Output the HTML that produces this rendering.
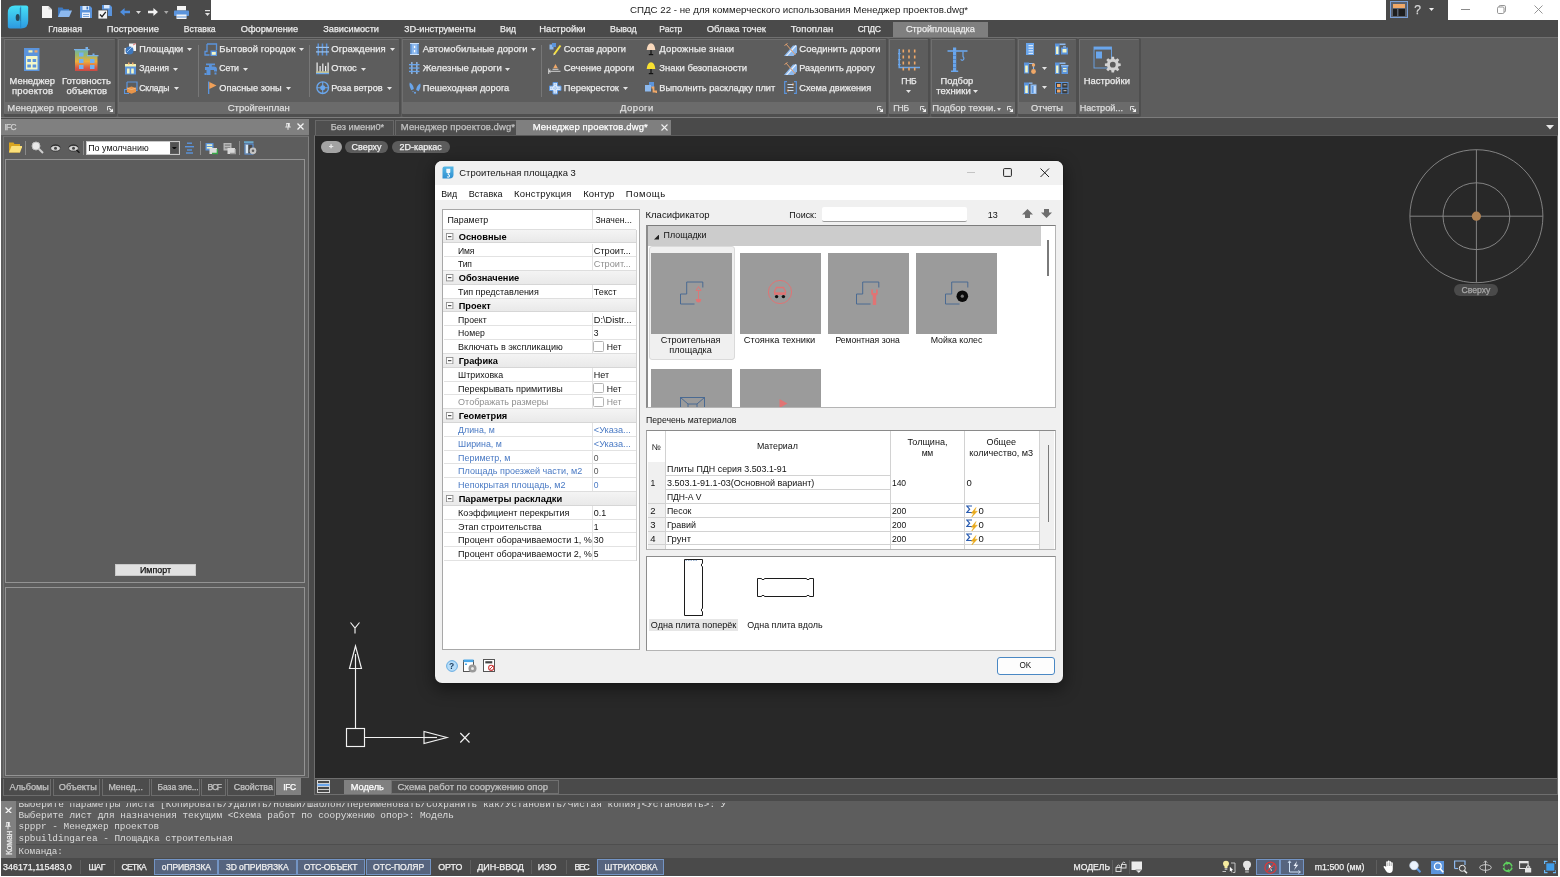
<!DOCTYPE html>
<html lang="ru">
<head>
<meta charset="utf-8">
<title>СПДС 22</title>
<style>
*{box-sizing:border-box}
html,body{margin:0;padding:0}
body{width:1560px;height:877px;background:#fff;position:relative;overflow:hidden;font-family:"Liberation Sans",sans-serif;font-size:11px;color:#e6e6e6}
.a{position:absolute}
.t{position:absolute;white-space:nowrap;line-height:14px;-webkit-text-stroke:0.25px}
.n{-webkit-text-stroke:0}
#app{left:1px;top:0;width:1557px;height:875.5px;background:#4a4a4a}
/* title */
#tw{left:211px;top:0;width:1175px;height:20px;background:#fff}
#tw2{left:1448px;top:0;width:113px;height:20px;background:#fff}
</style>
</head>
<body>
<div id="root" class="a" style="left:0;top:0;width:1560px;height:877px;will-change:transform">
<div id="app" class="a">
</div>
<div id="tw" class="a"></div>
<div class="a" style="left:1386px;top:0;width:62px;height:20px;background:#4a4a4a"></div>
<div id="tw2" class="a"></div>
<svg class="a" style="left:7px;top:5px;" width="22" height="24" viewBox="0 0 22 24"><defs><linearGradient id="lg1" x1="0" y1="0" x2="0" y2="1"><stop offset="0" stop-color="#46e0f6"/><stop offset="1" stop-color="#2d98e0"/></linearGradient></defs>
<path d="M8 0.6H19.2Q21.2 0.6 21.2 2.6V16Q21.2 23.6 14 23.6H2.8Q0.8 23.6 0.8 21.6V8Q0.8 0.6 8 0.6Z" fill="url(#lg1)"/><path d="M13.7 1.5V22.8" stroke="#1f86c4" stroke-width="0.8"/><ellipse cx="10.7" cy="12.4" rx="2" ry="3.5" fill="#27495c"/><path d="M13.3 3V16" stroke="#2a7aa8" stroke-width="0.9"/></svg>
<svg class="a" style="left:42px;top:6px;" width="10" height="12" viewBox="0 0 10 12"><path d="M0 0H6.5L10 3.5V12H0Z" fill="#f4f4f4"/><path d="M6.5 0V3.5H10Z" fill="#c9c9c9"/></svg>
<svg class="a" style="left:58px;top:7px;" width="14" height="10" viewBox="0 0 14 10"><path d="M0 0.5H4.5L5.5 2H11V10H0Z" fill="#3f78bd"/><path d="M2.8 3.5H14L11.2 10H0Z" fill="#8db9ee"/></svg>
<svg class="a" style="left:80px;top:6px;" width="12" height="12" viewBox="0 0 12 12"><path d="M0 0H10L12 2V12H0Z" fill="#5b94dc"/><rect x="2.5" y="0" width="6.5" height="4" fill="#dbe9fb"/><rect x="6.5" y="0.6" width="1.6" height="2.8" fill="#3f78bd"/><rect x="2" y="6.5" width="8" height="5.5" fill="#e9f1fc"/><rect x="3" y="8" width="6" height="1" fill="#7aa7de"/><rect x="3" y="10" width="6" height="1" fill="#7aa7de"/></svg>
<svg class="a" style="left:98px;top:5px;" width="14" height="14" viewBox="0 0 14 14"><path d="M4 0H12L14 2V11H4Z" fill="#5b94dc"/><rect x="6" y="0" width="5.5" height="3.4" fill="#dbe9fb"/><rect x="0" y="5" width="9.5" height="9" fill="#f4f4f4" stroke="#444" stroke-width="0.8"/><path d="M2 9.5L4 11.7L7.8 6.8" stroke="#222" stroke-width="1.3" fill="none"/></svg>
<svg class="a" style="left:120px;top:8px;" width="10" height="8" viewBox="0 0 10 8"><path d="M0 4L4.6 0V2.7H10V5.3H4.6V8Z" fill="#4f8fe0"/></svg>
<svg class="a" style="left:136px;top:11px;" width="5" height="3" viewBox="0 0 5 3"><path d="M0 0H5 L2.5 3 Z" fill="#d8d8d8"/></svg>
<svg class="a" style="left:148px;top:8px;" width="10" height="8" viewBox="0 0 10 8"><path d="M10 4L5.4 0V2.7H0V5.3H5.4V8Z" fill="#f2f2f2"/></svg>
<svg class="a" style="left:164.45px;top:11px;" width="4.5" height="3" viewBox="0 0 4.5 3"><path d="M0 0H4.5 L2.25 3 Z" fill="#a8a8a8"/></svg>
<svg class="a" style="left:174px;top:6px;" width="15" height="13" viewBox="0 0 15 13"><rect x="3" y="0" width="9" height="4.5" fill="#f4f4f4"/><rect x="0" y="4.5" width="15" height="5.5" rx="0.8" fill="#5b94dc"/><rect x="2.5" y="8.5" width="10" height="4.5" fill="#f4f4f4"/><rect x="2.5" y="10.5" width="10" height="1" fill="#5b94dc"/></svg>
<svg class="a" style="left:204.5px;top:10px;" width="5" height="7" viewBox="0 0 5 7"><rect x="0" y="0" width="5" height="1.2" fill="#e0e0e0"/><path d="M0 3H5L2.5 6Z" fill="#e0e0e0"/></svg>
<svg class="a" style="left:1390px;top:1px;" width="18" height="17" viewBox="0 0 18 17"><rect x="0.5" y="0.5" width="17" height="16" fill="#5a6270" stroke="#7aa0d8" stroke-width="1"/><rect x="3" y="3" width="12" height="4" fill="#f0a868"/><rect x="3" y="8" width="4" height="7" fill="#1e1e1e"/><rect x="8.5" y="8" width="6.5" height="7" fill="#1e1e1e"/></svg>
<div class="t" style="left:1414.16px;top:3.5px;font-size:12px;line-height:12px;color:#d6d6d6;">?</div>
<svg class="a" style="left:1428.5px;top:7.5px;" width="5" height="3" viewBox="0 0 5 3"><path d="M0 0H5 L2.5 3 Z" fill="#f0f0f0"/></svg>
<div class="a" style="left:1461px;top:9px;width:9px;height:1px;background:#8a8a8a;"></div>
<svg class="a" style="left:1497px;top:5px;" width="9" height="9" viewBox="0 0 9 9"><rect x="0.5" y="2" width="6.5" height="6.5" rx="1.2" fill="none" stroke="#8a8a8a" stroke-width="0.9"/><path d="M2 2V1.6Q2 0.5 3.2 0.5H7.2Q8.5 0.5 8.5 1.8V5.8Q8.5 7 7.2 7" fill="none" stroke="#8a8a8a" stroke-width="0.9"/></svg>
<svg class="a" style="left:1534px;top:5px;" width="9" height="9" viewBox="0 0 9 9"><path d="M0.5 0.5L8.5 8.5M8.5 0.5L0.5 8.5" stroke="#8a8a8a" stroke-width="0.9"/></svg>
<div class="a" style="left:893px;top:22px;width:95px;height:15px;background:#7f7f7f;"></div>
<div class="t" style="left:48.3px;top:23.3px;font-size:8.85px;line-height:12px;color:#ececec;">Главная</div>
<div class="t" style="left:106.7px;top:23.3px;font-size:9.39px;line-height:12px;color:#ececec;">Построение</div>
<div class="t" style="left:183.7px;top:23.3px;font-size:8.61px;line-height:12px;color:#ececec;">Вставка</div>
<div class="t" style="left:240.7px;top:23.3px;font-size:9.28px;line-height:12px;color:#ececec;">Оформление</div>
<div class="t" style="left:323.3px;top:23.3px;font-size:9.18px;line-height:12px;color:#ececec;">Зависимости</div>
<div class="t" style="left:404.3px;top:23.3px;font-size:9.29px;line-height:12px;color:#ececec;">3D-инструменты</div>
<div class="t" style="left:500px;top:23.3px;font-size:8.84px;line-height:12px;color:#ececec;">Вид</div>
<div class="t" style="left:539.3px;top:23.3px;font-size:9.46px;line-height:12px;color:#ececec;">Настройки</div>
<div class="t" style="left:610px;top:23.3px;font-size:8.83px;line-height:12px;color:#ececec;">Вывод</div>
<div class="t" style="left:659.3px;top:23.3px;font-size:8.55px;line-height:12px;letter-spacing:-0.03px;color:#ececec;">Растр</div>
<div class="t" style="left:706.7px;top:23.3px;font-size:9.5px;line-height:12px;letter-spacing:0.01px;color:#ececec;">Облака точек</div>
<div class="t" style="left:790.7px;top:23.3px;font-size:9.5px;line-height:12px;letter-spacing:0.09px;color:#ececec;">Топоплан</div>
<div class="t" style="left:857.7px;top:23.3px;font-size:8.55px;line-height:12px;letter-spacing:-0.33px;color:#ececec;">СПДС</div>
<div class="t" style="left:906px;top:23.3px;font-size:9.17px;line-height:12px;color:#ececec;">Стройплощадка</div>
<div class="a" style="left:1px;top:37px;width:1557px;height:81px;background:#5d5d5d;border-top:1px solid #707070;border-bottom:1px solid #7c7c7c;"></div>
<div class="a" style="left:3.5px;top:38.3px;width:113.8px;height:78.4px;background:#4f4f4f;border-radius:2px;"></div>
<div class="a" style="left:4px;top:39.2px;width:111px;height:75px;background:#5d5d5d;border-top:1px solid #6f6f6f;border-left:1px solid #6f6f6f;border-radius:1px;"></div>
<div class="a" style="left:5px;top:102px;width:110px;height:12.2px;background:#6b6b6b;"></div>
<div class="t" style="left:7.3px;top:102px;font-size:9.5px;line-height:12px;letter-spacing:0.11px;color:#dedede;">Менеджер проектов</div>
<svg class="a" style="left:106.5px;top:105.5px;" width="6" height="6" viewBox="0 0 6 6"><path d="M0.5 4.3V0.5H4.3" stroke="#dcdcdc" stroke-width="1" fill="none"/><path d="M2.2 2.2L4.5 4.5" stroke="#ececec" stroke-width="1.1"/><path d="M6 2.4V6H2.4Z" fill="#f2f2f2"/></svg>
<div class="a" style="left:117.5px;top:38.3px;width:283.8px;height:78.4px;background:#4f4f4f;border-radius:2px;"></div>
<div class="a" style="left:118px;top:39.2px;width:281px;height:75px;background:#5d5d5d;border-top:1px solid #6f6f6f;border-left:1px solid #6f6f6f;border-radius:1px;"></div>
<div class="a" style="left:119px;top:102px;width:280px;height:12.2px;background:#6b6b6b;"></div>
<div class="t" style="left:227.7px;top:102px;font-size:9.49px;line-height:12px;color:#dedede;">Стройгенплан</div>
<div class="a" style="left:401.5px;top:38.3px;width:486.6px;height:78.4px;background:#4f4f4f;border-radius:2px;"></div>
<div class="a" style="left:402px;top:39.2px;width:483.8px;height:75px;background:#5d5d5d;border-top:1px solid #6f6f6f;border-left:1px solid #6f6f6f;border-radius:1px;"></div>
<div class="a" style="left:403px;top:102px;width:482.8px;height:12.2px;background:#6b6b6b;"></div>
<div class="t" style="left:620px;top:102px;font-size:9.5px;line-height:12px;letter-spacing:0.43px;color:#dedede;">Дороги</div>
<svg class="a" style="left:877.3px;top:105.5px;" width="6" height="6" viewBox="0 0 6 6"><path d="M0.5 4.3V0.5H4.3" stroke="#dcdcdc" stroke-width="1" fill="none"/><path d="M2.2 2.2L4.5 4.5" stroke="#ececec" stroke-width="1.1"/><path d="M6 2.4V6H2.4Z" fill="#f2f2f2"/></svg>
<div class="a" style="left:888.5px;top:38.3px;width:41.8px;height:78.4px;background:#4f4f4f;border-radius:2px;"></div>
<div class="a" style="left:889px;top:39.2px;width:39px;height:75px;background:#5d5d5d;border-top:1px solid #6f6f6f;border-left:1px solid #6f6f6f;border-radius:1px;"></div>
<div class="a" style="left:890px;top:102px;width:38px;height:12.2px;background:#6b6b6b;"></div>
<div class="t" style="left:893.3px;top:102px;font-size:8.55px;line-height:12px;letter-spacing:-0.36px;color:#dedede;">ГНБ</div>
<svg class="a" style="left:919.5px;top:105.5px;" width="6" height="6" viewBox="0 0 6 6"><path d="M0.5 4.3V0.5H4.3" stroke="#dcdcdc" stroke-width="1" fill="none"/><path d="M2.2 2.2L4.5 4.5" stroke="#ececec" stroke-width="1.1"/><path d="M6 2.4V6H2.4Z" fill="#f2f2f2"/></svg>
<div class="a" style="left:930.5px;top:38.3px;width:86.8px;height:78.4px;background:#4f4f4f;border-radius:2px;"></div>
<div class="a" style="left:931px;top:39.2px;width:84px;height:75px;background:#5d5d5d;border-top:1px solid #6f6f6f;border-left:1px solid #6f6f6f;border-radius:1px;"></div>
<div class="a" style="left:932px;top:102px;width:83px;height:12.2px;background:#6b6b6b;"></div>
<div class="t" style="left:932.3px;top:102px;font-size:9.5px;line-height:12px;letter-spacing:0.03px;color:#dedede;">Подбор техни.</div>
<svg class="a" style="left:1006.5px;top:105.5px;" width="6" height="6" viewBox="0 0 6 6"><path d="M0.5 4.3V0.5H4.3" stroke="#dcdcdc" stroke-width="1" fill="none"/><path d="M2.2 2.2L4.5 4.5" stroke="#ececec" stroke-width="1.1"/><path d="M6 2.4V6H2.4Z" fill="#f2f2f2"/></svg>
<div class="a" style="left:1017.5px;top:38.3px;width:60.8px;height:78.4px;background:#4f4f4f;border-radius:2px;"></div>
<div class="a" style="left:1018px;top:39.2px;width:58px;height:75px;background:#5d5d5d;border-top:1px solid #6f6f6f;border-left:1px solid #6f6f6f;border-radius:1px;"></div>
<div class="a" style="left:1019px;top:102px;width:57px;height:12.2px;background:#6b6b6b;"></div>
<div class="t" style="left:1031px;top:102px;font-size:9.26px;line-height:12px;color:#dedede;">Отчеты</div>
<div class="a" style="left:1078px;top:38.3px;width:62.8px;height:78.4px;background:#4f4f4f;border-radius:2px;"></div>
<div class="a" style="left:1078.5px;top:39.2px;width:60px;height:75px;background:#5d5d5d;border-top:1px solid #6f6f6f;border-left:1px solid #6f6f6f;border-radius:1px;"></div>
<div class="a" style="left:1079.5px;top:102px;width:59px;height:12.2px;background:#6b6b6b;"></div>
<div class="t" style="left:1079.7px;top:102px;font-size:9.13px;line-height:12px;color:#dedede;">Настрой...</div>
<svg class="a" style="left:1130px;top:105.5px;" width="6" height="6" viewBox="0 0 6 6"><path d="M0.5 4.3V0.5H4.3" stroke="#dcdcdc" stroke-width="1" fill="none"/><path d="M2.2 2.2L4.5 4.5" stroke="#ececec" stroke-width="1.1"/><path d="M6 2.4V6H2.4Z" fill="#f2f2f2"/></svg>
<svg class="a" style="left:996.8px;top:108px;" width="4" height="3" viewBox="0 0 4 3"><path d="M0 0H4 L2 3 Z" fill="#d8d8d8"/></svg>
<div class="t" style="left:630px;top:3.6px;font-size:9.73px;line-height:12px;color:#1a1a1a;-webkit-text-stroke:0;">СПДС 22 - не для коммерческого использования Менеджер проектов.dwg*</div>
<svg class="a" style="left:24px;top:47.5px;" width="16" height="23.5" viewBox="0 0 16 23.5"><rect x="0" y="0" width="15.5" height="23.5" fill="#5b94dc"/><rect x="4.5" y="2.3" width="4" height="2.2" fill="#f7f3b0"/><rect x="10.5" y="2.3" width="3" height="2.2" fill="#f0a868"/><rect x="2" y="8" width="11.5" height="13.5" fill="#f3f7c8"/><rect x="3.3" y="11" width="3.6" height="3" fill="#5b94dc"/><rect x="8.6" y="11" width="3.6" height="3" fill="#5b94dc"/><rect x="3.3" y="16.5" width="3.6" height="3" fill="#5b94dc"/><rect x="8.6" y="16.5" width="3.6" height="3" fill="#5b94dc"/></svg>
<svg class="a" style="left:74px;top:46.5px;" width="24.5" height="24.5" viewBox="0 0 24.5 24.5"><defs><linearGradient id="lg2" x1="0" y1="0" x2="0" y2="1"><stop offset="0" stop-color="#6fb3a8"/><stop offset="0.25" stop-color="#9bb86a"/><stop offset="0.55" stop-color="#ecae3c"/><stop offset="0.85" stop-color="#d95a48"/><stop offset="1" stop-color="#c94a44"/></linearGradient></defs><path d="M1 3H14V9H23.5V24H1Z" fill="url(#lg2)"/><rect x="0" y="2" width="15.5" height="1.3" fill="#79b1e8"/><rect x="11.5" y="0" width="2.5" height="2.5" fill="#79b1e8"/><rect x="13" y="8" width="11.5" height="1.3" fill="#79b1e8"/><rect x="18.5" y="6.5" width="2" height="2" fill="#79b1e8"/><g fill="#72b2f2"><rect x="5" y="5.5" width="4.5" height="4"/><rect x="5" y="12" width="4.5" height="4"/><rect x="16" y="12" width="4.5" height="4"/><rect x="5" y="18" width="4.5" height="4"/><rect x="16" y="18" width="4.5" height="4"/></g></svg>
<div class="t" style="left:9.6px;top:74.7px;font-size:9.36px;line-height:12px;color:#ececec;">Менеджер</div>
<div class="t" style="left:12px;top:85px;font-size:9.5px;line-height:12px;letter-spacing:0.17px;color:#ececec;">проектов</div>
<div class="t" style="left:62px;top:74.7px;font-size:9.5px;line-height:12px;letter-spacing:0.01px;color:#ececec;">Готовность</div>
<div class="t" style="left:66.5px;top:85px;font-size:9.5px;line-height:12px;color:#ececec;">объектов</div>
<div class="t" style="left:139.3px;top:43px;font-size:9.11px;line-height:12px;color:#ececec;">Площадки</div>
<svg class="a" style="left:186.8px;top:48.2px;" width="5" height="3" viewBox="0 0 5 3"><path d="M0 0H5 L2.5 3 Z" fill="#e4e4e4"/></svg>
<div class="t" style="left:139.3px;top:62.3px;font-size:8.75px;line-height:12px;color:#ececec;">Здания</div>
<svg class="a" style="left:173.2px;top:67.5px;" width="5" height="3" viewBox="0 0 5 3"><path d="M0 0H5 L2.5 3 Z" fill="#e4e4e4"/></svg>
<div class="t" style="left:139.3px;top:81.7px;font-size:8.55px;line-height:12px;letter-spacing:-0.18px;color:#ececec;">Склады</div>
<svg class="a" style="left:174.2px;top:86.9px;" width="5" height="3" viewBox="0 0 5 3"><path d="M0 0H5 L2.5 3 Z" fill="#e4e4e4"/></svg>
<div class="t" style="left:219.3px;top:43px;font-size:9.5px;line-height:12px;letter-spacing:0.1px;color:#ececec;">Бытовой городок</div>
<svg class="a" style="left:299.2px;top:48.2px;" width="5" height="3" viewBox="0 0 5 3"><path d="M0 0H5 L2.5 3 Z" fill="#e4e4e4"/></svg>
<div class="t" style="left:219.3px;top:62.3px;font-size:8.71px;line-height:12px;color:#ececec;">Сети</div>
<svg class="a" style="left:243.2px;top:67.5px;" width="5" height="3" viewBox="0 0 5 3"><path d="M0 0H5 L2.5 3 Z" fill="#e4e4e4"/></svg>
<div class="t" style="left:219.3px;top:81.7px;font-size:9.24px;line-height:12px;color:#ececec;">Опасные зоны</div>
<svg class="a" style="left:286.2px;top:86.9px;" width="5" height="3" viewBox="0 0 5 3"><path d="M0 0H5 L2.5 3 Z" fill="#e4e4e4"/></svg>
<div class="t" style="left:331.3px;top:43px;font-size:9.5px;line-height:12px;letter-spacing:0.01px;color:#ececec;">Ограждения</div>
<svg class="a" style="left:389.8px;top:48.2px;" width="5" height="3" viewBox="0 0 5 3"><path d="M0 0H5 L2.5 3 Z" fill="#e4e4e4"/></svg>
<div class="t" style="left:331.3px;top:62.3px;font-size:9.27px;line-height:12px;color:#ececec;">Откос</div>
<svg class="a" style="left:360.8px;top:67.5px;" width="5" height="3" viewBox="0 0 5 3"><path d="M0 0H5 L2.5 3 Z" fill="#e4e4e4"/></svg>
<div class="t" style="left:331.3px;top:81.7px;font-size:9.17px;line-height:12px;color:#ececec;">Роза ветров</div>
<svg class="a" style="left:386.8px;top:86.9px;" width="5" height="3" viewBox="0 0 5 3"><path d="M0 0H5 L2.5 3 Z" fill="#e4e4e4"/></svg>
<div class="t" style="left:422.7px;top:43px;font-size:9.5px;line-height:12px;letter-spacing:0.05px;color:#ececec;">Автомобильные дороги</div>
<svg class="a" style="left:530.8px;top:48.2px;" width="5" height="3" viewBox="0 0 5 3"><path d="M0 0H5 L2.5 3 Z" fill="#e4e4e4"/></svg>
<div class="t" style="left:422.7px;top:62.3px;font-size:9.5px;line-height:12px;letter-spacing:0.02px;color:#ececec;">Железные дороги</div>
<svg class="a" style="left:505.2px;top:67.5px;" width="5" height="3" viewBox="0 0 5 3"><path d="M0 0H5 L2.5 3 Z" fill="#e4e4e4"/></svg>
<div class="t" style="left:422.7px;top:81.7px;font-size:9.32px;line-height:12px;color:#ececec;">Пешеходная дорога</div>
<div class="t" style="left:563.7px;top:43px;font-size:9.21px;line-height:12px;color:#ececec;">Состав дороги</div>
<div class="t" style="left:563.7px;top:62.3px;font-size:9.49px;line-height:12px;color:#ececec;">Сечение дороги</div>
<div class="t" style="left:563.7px;top:81.7px;font-size:9.41px;line-height:12px;color:#ececec;">Перекресток</div>
<svg class="a" style="left:622.8px;top:86.9px;" width="5" height="3" viewBox="0 0 5 3"><path d="M0 0H5 L2.5 3 Z" fill="#e4e4e4"/></svg>
<div class="t" style="left:659.3px;top:43px;font-size:9.5px;line-height:12px;letter-spacing:0.13px;color:#ececec;">Дорожные знаки</div>
<div class="t" style="left:659.3px;top:62.3px;font-size:9.45px;line-height:12px;color:#ececec;">Знаки безопасности</div>
<div class="t" style="left:659.3px;top:81.7px;font-size:9.23px;line-height:12px;color:#ececec;">Выполнить раскладку плит</div>
<div class="t" style="left:799.3px;top:43px;font-size:9.5px;line-height:12px;letter-spacing:0.04px;color:#ececec;">Соединить дороги</div>
<div class="t" style="left:799.3px;top:62.3px;font-size:9.19px;line-height:12px;color:#ececec;">Разделить дорогу</div>
<div class="t" style="left:799.3px;top:81.7px;font-size:9.18px;line-height:12px;color:#ececec;">Схема движения</div>
<div class="a" style="left:197.5px;top:45px;width:1px;height:52px;background:#777;"></div>
<div class="a" style="left:309.2px;top:45px;width:1px;height:52px;background:#777;"></div>
<div class="a" style="left:541.2px;top:45px;width:1px;height:52px;background:#777;"></div>
<svg class="a" style="left:124px;top:43px;" width="13" height="13" viewBox="0 0 13 13"><rect x="5" y="0.5" width="7" height="7.5" fill="#f4f4f4"/><rect x="0.5" y="5" width="5" height="6" fill="#f4f4f4"/><circle cx="5.5" cy="7.5" r="4" fill="#3f78bd"/><path d="M3 9L8 4" stroke="#9cc3f0" stroke-width="1"/><path d="M9 2L12 0.5" stroke="#e07070" stroke-width="1"/></svg>
<svg class="a" style="left:124px;top:62px;" width="13" height="13" viewBox="0 0 13 13"><rect x="1" y="2" width="11" height="10.5" fill="#5b94dc"/><rect x="1" y="2" width="11" height="2.5" fill="#f7f3b0"/><rect x="4" y="0.5" width="1.5" height="2" fill="#f0a868"/><rect x="8" y="0.5" width="1.5" height="2" fill="#f0a868"/><rect x="3" y="6.5" width="2.6" height="5" fill="#f3f7c8"/><rect x="7.2" y="6.5" width="2.6" height="5" fill="#f3f7c8"/></svg>
<svg class="a" style="left:123.5px;top:81px;" width="14" height="14" viewBox="0 0 14 14"><path d="M3 1H13V9.5H9M5 12.5H0.5V8.5H3V1" fill="none" stroke="#5b94dc" stroke-width="1.2"/><path d="M3 7L7.5 5.5L12 7V11L7.5 12.8L3 11Z" fill="#e8954a"/><path d="M3 7L7.5 8.5L12 7" fill="none" stroke="#f6c08a" stroke-width="0.8"/></svg>
<svg class="a" style="left:204px;top:42.5px;" width="14" height="14" viewBox="0 0 14 14"><path d="M3 1H12.5V7M3 1V8.5H1V12H5.5" fill="none" stroke="#5b94dc" stroke-width="1.3"/><rect x="6.5" y="7.5" width="6.5" height="5.5" fill="#5b94dc"/><rect x="7.8" y="9" width="4" height="2.8" fill="#f3f7c8"/></svg>
<svg class="a" style="left:204px;top:61.5px;" width="14" height="14" viewBox="0 0 14 14"><path d="M2 1.5H11V3.2H7.8V4.6H10Q13 4.6 13 7.6V9.5H10V8H6.5V13H2.5V8H1V5H5V3.2H2Z" fill="#5b94dc"/><rect x="10.5" y="10.5" width="2" height="2" fill="#5b94dc"/><rect x="0.5" y="11" width="2" height="2" fill="#5b94dc"/></svg>
<svg class="a" style="left:207px;top:80.5px;" width="11" height="14" viewBox="0 0 11 14"><rect x="1" y="0.5" width="1.3" height="12.5" fill="#5b94dc"/><path d="M2.3 1L9.5 4.5L2.3 8Z" fill="#f0a058"/></svg>
<svg class="a" style="left:316px;top:42.5px;" width="13" height="13" viewBox="0 0 13 13"><g fill="#5b94dc"><rect x="1.5" y="0.5" width="1.5" height="12"/><rect x="5.7" y="0.5" width="1.5" height="12"/><rect x="9.9" y="0.5" width="1.5" height="12"/></g><g fill="#9cc3f0"><rect x="0" y="3.8" width="13" height="1.2"/><rect x="0" y="8.3" width="13" height="1.2"/></g></svg>
<svg class="a" style="left:316px;top:61.5px;" width="13" height="13" viewBox="0 0 13 13"><g fill="#f2f2f2"><rect x="0.5" y="0.5" width="1.2" height="9"/><rect x="3.5" y="4" width="1.2" height="5.5"/><rect x="6.2" y="1.5" width="1.2" height="8"/><rect x="9" y="4" width="1.2" height="5.5"/><rect x="11.5" y="0.5" width="1.2" height="9"/></g><rect x="0" y="9.5" width="13" height="1.3" fill="#f3e9a0"/><rect x="0" y="10.8" width="13" height="1.4" fill="#6aa6ec"/></svg>
<svg class="a" style="left:316px;top:81px;" width="14" height="14" viewBox="0 0 14 14"><circle cx="6.7" cy="6.7" r="5.8" fill="none" stroke="#6aa6ec" stroke-width="1.4"/><circle cx="6.7" cy="6.7" r="2.5" fill="#6aa6ec"/><path d="M6.7 1V12.4M1 6.7H12.4" stroke="#6aa6ec" stroke-width="1.1"/></svg>
<svg class="a" style="left:409.5px;top:43px;" width="9" height="12" viewBox="0 0 9 12"><rect x="0.5" y="0" width="8" height="12" fill="#8db9ee"/><rect x="0.5" y="0" width="1.2" height="12" fill="#5b94dc"/><rect x="7.3" y="0" width="1.2" height="12" fill="#5b94dc"/><rect x="3.9" y="2.8" width="1.3" height="2.3" fill="#fff"/><rect x="3.9" y="7" width="1.3" height="2.3" fill="#fff"/><rect x="0" y="0" width="9" height="0.9" fill="#d5e6fa"/><rect x="0" y="11.1" width="9" height="0.9" fill="#d5e6fa"/></svg>
<svg class="a" style="left:409px;top:62px;" width="11" height="12" viewBox="0 0 11 12"><g fill="#9cc3f0"><rect x="2.2" y="0" width="1.3" height="12"/><rect x="7.2" y="0" width="1.3" height="12"/></g><g fill="#6aa6ec"><rect x="0" y="2" width="10.5" height="1.3"/><rect x="0" y="5.4" width="10.5" height="1.3"/><rect x="0" y="8.8" width="10.5" height="1.3"/></g></svg>
<svg class="a" style="left:408.5px;top:82px;" width="12" height="12" viewBox="0 0 12 12"><path d="M0.8 0.5Q4.5 2.5 4.8 7L2.3 8.3Q-0.3 4 0.8 0.5Z" fill="#6aa6ec"/><path d="M11.2 1.5Q7.5 3.5 7.2 8L9.7 9.3Q12.3 5 11.2 1.5Z" fill="#6aa6ec"/><circle cx="6" cy="10.8" r="1" fill="#6aa6ec"/><circle cx="4" cy="9.6" r="0.6" fill="#6aa6ec"/></svg>
<svg class="a" style="left:548.5px;top:43px;" width="13" height="13" viewBox="0 0 13 13"><rect x="0.5" y="1.5" width="4" height="5" fill="#8db9ee"/><rect x="3" y="0" width="4" height="4" fill="#5b94dc"/><path d="M5 11.5L11.5 2.5" stroke="#f6e040" stroke-width="2"/><path d="M4.2 12.5L5 10.5L6.2 11.3Z" fill="#ddd"/></svg>
<svg class="a" style="left:548px;top:62.5px;" width="13" height="12" viewBox="0 0 13 12"><path d="M0.7 5.5V11M0.7 8.3H12.5M2.5 7L0.9 8.3L2.5 9.6" stroke="#e0e0e0" stroke-width="0.9" fill="none"/><path d="M4.5 6.3H10.5" stroke="#e0e0e0" stroke-width="0.9"/><path d="M7.5 1L9.8 5.3H5.2Z" fill="#f0a868"/></svg>
<svg class="a" style="left:548.5px;top:81.5px;" width="13" height="13" viewBox="0 0 13 13"><path d="M4 0.5H8.5V4H12V8.5H8.5V12H4V8.5H0.5V4H4Z" fill="#dbe9fb" stroke="#5b94dc" stroke-width="1"/><path d="M6.2 1.5V11M1.5 6.2H11" stroke="#8db9ee" stroke-width="0.9" stroke-dasharray="1.6 1"/></svg>
<svg class="a" style="left:646px;top:43px;" width="10" height="13" viewBox="0 0 10 13"><path d="M5 0.3Q8.6 0.5 9.3 7H0.7Q1.4 0.5 5 0.3Z" fill="#f8d8bc"/><rect x="4.4" y="7" width="1.2" height="4.5" fill="#111"/><rect x="2.8" y="11" width="4.4" height="1.2" fill="#111"/></svg>
<svg class="a" style="left:646px;top:62px;" width="10" height="13" viewBox="0 0 10 13"><path d="M5 0.3Q8.6 0.5 9.3 7H0.7Q1.4 0.5 5 0.3Z" fill="#f8e030"/><rect x="4.4" y="7" width="1.2" height="4.5" fill="#111"/><rect x="2.8" y="11" width="4.4" height="1.2" fill="#111"/></svg>
<svg class="a" style="left:644.5px;top:82px;" width="12" height="12" viewBox="0 0 12 12"><rect x="4" y="0" width="5" height="5" fill="#5b94dc"/><rect x="0" y="3" width="6" height="6.5" fill="#8db9ee"/><path d="M6.5 5.5H8.5V9.5H11.5V11" stroke="#f0a868" stroke-width="1.8" fill="none"/></svg>
<svg class="a" style="left:783.5px;top:42.5px;" width="13" height="13" viewBox="0 0 13 13"><path d="M0 13L9 2.5H13V9.5L9.5 13Z" fill="#8db9ee"/><path d="M2.5 13L12 2.5" stroke="#e8f1fc" stroke-width="1.2"/><path d="M2 1L11.5 12" stroke="#e0a070" stroke-width="1"/><path d="M0.5 2.5L3.5 0.5" stroke="#e0a070" stroke-width="1"/></svg>
<svg class="a" style="left:783.5px;top:61.5px;" width="13" height="13" viewBox="0 0 13 13"><path d="M0 13L9 2.5H13V9.5L9.5 13Z" fill="#8db9ee"/><path d="M2.5 13L12 2.5" stroke="#e8f1fc" stroke-width="1.2"/><path d="M2 1L11.5 12" stroke="#e0a070" stroke-width="1"/><path d="M0.5 2.5L3.5 0.5" stroke="#e0a070" stroke-width="1"/></svg>
<svg class="a" style="left:783.5px;top:81px;" width="13" height="13" viewBox="0 0 13 13"><path d="M3 0.7H0.7V12.3H3M10 0.7H12.3V12.3H10" stroke="#5b94dc" stroke-width="1.2" fill="none"/><path d="M3.5 3.5H9.5M3.5 6.5H9.5M3.5 9.5H9.5" stroke="#c8daf0" stroke-width="1.1"/><path d="M8.5 2.3L10 3.5L8.5 4.7M4.5 8.3L3 9.5L4.5 10.7" stroke="#f0a868" stroke-width="0.9" fill="none"/></svg>
<svg class="a" style="left:897px;top:47.5px;" width="24" height="24" viewBox="0 0 24 24"><path d="M2.2 1V19.5H23" stroke="#6aa6ec" stroke-width="1.5" fill="none"/><g fill="#6aa6ec"><rect x="1" y="5" width="2.6" height="1.2"/><rect x="1" y="11" width="2.6" height="1.2"/><rect x="1" y="16" width="2.6" height="1.2"/></g><rect x="5.5" y="1.5" width="1.6" height="3" fill="#f0a868"/><rect x="5.5" y="7.5" width="1.6" height="3" fill="#f0a868"/><rect x="5.5" y="13.5" width="1.6" height="3" fill="#f0a868"/><rect x="5.5" y="19.5" width="1.6" height="3" fill="#f0a868"/><rect x="11.2" y="1.5" width="1.6" height="3" fill="#f0a868"/><rect x="11.2" y="7.5" width="1.6" height="3" fill="#f0a868"/><rect x="11.2" y="13.5" width="1.6" height="3" fill="#f0a868"/><rect x="11.2" y="19.5" width="1.6" height="3" fill="#f0a868"/><rect x="16.9" y="1.5" width="1.6" height="3" fill="#f0a868"/><rect x="16.9" y="7.5" width="1.6" height="3" fill="#f0a868"/><rect x="16.9" y="13.5" width="1.6" height="3" fill="#f0a868"/><rect x="16.9" y="19.5" width="1.6" height="3" fill="#f0a868"/></svg>
<div class="t" style="left:901.2px;top:75px;font-size:8.55px;line-height:12px;letter-spacing:-0.46px;color:#ececec;">ГНБ</div>
<svg class="a" style="left:906.2px;top:89.7px;" width="5" height="3" viewBox="0 0 5 3"><path d="M0 0H5 L2.5 3 Z" fill="#e4e4e4"/></svg>
<svg class="a" style="left:946.5px;top:46.5px;" width="21" height="25.5" viewBox="0 0 21 25.5"><rect x="6" y="0.5" width="3.2" height="23.5" fill="#6aa6ec"/><g fill="#4a7fc4"><rect x="6" y="4" width="3.2" height="0.8"/><rect x="6" y="8" width="3.2" height="0.8"/><rect x="6" y="12" width="3.2" height="0.8"/><rect x="6" y="16" width="3.2" height="0.8"/><rect x="6" y="20" width="3.2" height="0.8"/></g><rect x="0.5" y="3.2" width="20" height="1.6" fill="#6aa6ec"/><rect x="4" y="23.5" width="7.2" height="1.5" fill="#6aa6ec"/><path d="M16 4.8V9.5Q17.8 11.5 16 13Q14.6 13.8 13.8 12.3" stroke="#6aa6ec" stroke-width="1.2" fill="none"/></svg>
<div class="t" style="left:940.5px;top:75px;font-size:9.31px;line-height:12px;color:#ececec;">Подбор</div>
<div class="t" style="left:936.2px;top:85px;font-size:9.5px;line-height:12px;letter-spacing:0.09px;color:#ececec;">техники</div>
<svg class="a" style="left:972.8px;top:90.2px;" width="5" height="3" viewBox="0 0 5 3"><path d="M0 0H5 L2.5 3 Z" fill="#e4e4e4"/></svg>
<svg class="a" style="left:1026px;top:42.5px;" width="8" height="12.5" viewBox="0 0 8 12.5"><rect x="0" y="0" width="8" height="12.5" fill="#6aa6ec"/><g fill="#dbe9fb"><rect x="2.5" y="2" width="4.5" height="1.2"/><rect x="2.5" y="4.6" width="4.5" height="1.2"/><rect x="2.5" y="7.2" width="4.5" height="1.2"/><rect x="2.5" y="9.8" width="4.5" height="1.2"/></g></svg>
<svg class="a" style="left:1024px;top:62px;" width="13" height="12.5" viewBox="0 0 13 12.5"><rect x="0" y="0.5" width="5" height="11" fill="#5b94dc"/><rect x="1.2" y="3.5" width="2.6" height="7" fill="#f3f7c8"/><path d="M5 1.5H9.5V7" stroke="#8db9ee" stroke-width="1.2" fill="none"/><circle cx="9.5" cy="3" r="1.7" fill="#f0a868"/><circle cx="9.5" cy="9.5" r="2.4" fill="#f0a868"/></svg>
<svg class="a" style="left:1024px;top:81.5px;" width="13" height="12.5" viewBox="0 0 13 12.5"><rect x="0" y="0.5" width="5" height="11.5" fill="#5b94dc"/><rect x="1.2" y="3.5" width="2.6" height="7.5" fill="#f3f7c8"/><rect x="5" y="0.5" width="3.5" height="1.4" fill="#8db9ee"/><rect x="6.5" y="2.5" width="6" height="9.5" fill="#8db9ee"/><rect x="8" y="4" width="1.2" height="7" fill="#5b94dc"/><rect x="10.3" y="4" width="1.2" height="7" fill="#dbe9fb"/></svg>
<svg class="a" style="left:1041.5px;top:67px;" width="5" height="3" viewBox="0 0 5 3"><path d="M0 0H5 L2.5 3 Z" fill="#e4e4e4"/></svg>
<svg class="a" style="left:1041.5px;top:86.3px;" width="5" height="3" viewBox="0 0 5 3"><path d="M0 0H5 L2.5 3 Z" fill="#e4e4e4"/></svg>
<svg class="a" style="left:1055px;top:42.5px;" width="13.5" height="12.5" viewBox="0 0 13.5 12.5"><rect x="0" y="0.5" width="4.5" height="11.5" fill="#5b94dc"/><rect x="1.1" y="3.5" width="2.3" height="7.5" fill="#f3f7c8"/><rect x="4.5" y="0.5" width="6" height="1.6" fill="#8db9ee"/><rect x="6" y="4.5" width="7" height="7" fill="#5b94dc"/><rect x="7.5" y="6" width="4" height="3.5" fill="#f3f7c8"/><rect x="8" y="3.2" width="3" height="1.4" fill="#8db9ee"/></svg>
<svg class="a" style="left:1055px;top:62px;" width="13.5" height="12.5" viewBox="0 0 13.5 12.5"><rect x="0" y="0.5" width="4.5" height="11.5" fill="#5b94dc"/><rect x="1.1" y="3.5" width="2.3" height="7.5" fill="#f3f7c8"/><rect x="4.5" y="0.5" width="6" height="1.6" fill="#8db9ee"/><rect x="6.5" y="4" width="6.5" height="8" fill="#5b94dc"/><rect x="6" y="3" width="7.5" height="1.4" fill="#8db9ee"/><rect x="8" y="6" width="3.5" height="1.2" fill="#f3f7c8"/><rect x="8" y="8.5" width="3.5" height="1.2" fill="#f3f7c8"/></svg>
<svg class="a" style="left:1055px;top:81.5px;" width="13.5" height="12.5" viewBox="0 0 13.5 12.5"><rect x="0.5" y="0.5" width="12.5" height="11.5" fill="#3a3a3a" stroke="#5b94dc" stroke-width="1"/><path d="M6.7 0.5V12M0.5 6.2H13" stroke="#5b94dc" stroke-width="1"/><rect x="2" y="2" width="3.5" height="3" fill="#f0a868"/><rect x="2" y="7.5" width="3.5" height="3" fill="#f0a868"/><rect x="8.5" y="2.2" width="3" height="1.2" fill="#aaa"/><rect x="8.5" y="8" width="3" height="1.2" fill="#aaa"/></svg>
<svg class="a" style="left:1093px;top:46px;" width="30" height="27" viewBox="0 0 30 27"><rect x="1" y="1" width="17.5" height="21" fill="#5d5d5d" stroke="#6aa6ec" stroke-width="0.9"/><rect x="1" y="1" width="17.5" height="2.6" fill="#6aa6ec"/><rect x="3" y="5.5" width="6" height="7" fill="#6aa6ec"/><path d="M27.70 17.43 L27.70 19.97 L25.52 20.22 L24.92 21.67 L26.29 23.38 L24.48 25.19 L22.77 23.82 L21.32 24.42 L21.07 26.60 L18.53 26.60 L18.28 24.42 L16.83 23.82 L15.12 25.19 L13.31 23.38 L14.68 21.67 L14.08 20.22 L11.90 19.97 L11.90 17.43 L14.08 17.18 L14.68 15.73 L13.31 14.02 L15.12 12.21 L16.83 13.58 L18.28 12.98 L18.53 10.80 L21.07 10.80 L21.32 12.98 L22.77 13.58 L24.48 12.21 L26.29 14.02 L24.92 15.73 L25.52 17.18 Z" fill="#d2d2d2"/><circle cx="19.8" cy="18.7" r="2.88" fill="#5d5d5d"/></svg>
<div class="t" style="left:1083.8px;top:75px;font-size:9.42px;line-height:12px;color:#ececec;">Настройки</div>
<div class="a" style="left:1px;top:118.5px;width:308px;height:16.5px;background:#808080;"></div>
<div class="t" style="left:4.5px;top:121px;font-size:8.36px;line-height:12px;letter-spacing:-0.73px;color:#cfcfcf;">IFC</div>
<svg class="a" style="left:285px;top:122.7px;" width="6" height="7" viewBox="0 0 6 7"><path d="M1.3 0.5H4.7M1.8 0.5V3.7M4.2 0.5V3.7M0.3 4H5.7M3 4.2V6.8" stroke="#f0f0f0" stroke-width="0.9" fill="none"/><rect x="3" y="0.5" width="1.2" height="3.3" fill="#f0f0f0"/></svg>
<svg class="a" style="left:297.3px;top:122.7px;" width="7" height="7" viewBox="0 0 7 7"><path d="M0.5 0.5L6.5 6.5M6.5 0.5L0.5 6.5" stroke="#f4f4f4" stroke-width="1.3"/></svg>
<div class="a" style="left:1px;top:135px;width:307.5px;height:643px;background:#5d5d5d;"></div>
<div class="a" style="left:2.5px;top:136px;width:306px;height:642px;background:#5d5d5d;border:1px solid #737373;border-right:1.5px solid #808080;"></div>
<svg class="a" style="left:8.5px;top:142px;" width="13.5" height="11" viewBox="0 0 13.5 11"><path d="M0 0.5H4.5L5.5 2H11V10.5H0Z" fill="#d9a520"/><path d="M2.5 4H13.5L11 10.5H0Z" fill="#fbe07a"/></svg>
<div class="a" style="left:25.1px;top:141px;width:1px;height:14px;background:#8a8a8a;"></div>
<div class="a" style="left:83.2px;top:141px;width:1px;height:14px;background:#8a8a8a;"></div>
<div class="a" style="left:199.9px;top:141px;width:1px;height:14px;background:#8a8a8a;"></div>
<div class="a" style="left:238.9px;top:141px;width:1px;height:14px;background:#8a8a8a;"></div>
<svg class="a" style="left:30.5px;top:141px;" width="13" height="13" viewBox="0 0 13 13"><circle cx="5" cy="5" r="4" fill="#e8e8e8" stroke="#bdbdbd" stroke-width="1"/><path d="M8 8L12 12" stroke="#cfcfcf" stroke-width="2"/></svg>
<svg class="a" style="left:50px;top:143.5px;" width="11" height="8" viewBox="0 0 11 8"><ellipse cx="5.5" cy="4.3" rx="4.8" ry="2.8" fill="#d4d4d4" stroke="#2a2a2a" stroke-width="0.7"/><circle cx="5.5" cy="4.3" r="1.5" fill="#444"/><path d="M0.8 2.8Q5.5 -1.2 10.2 2.8" stroke="#222" stroke-width="0.8" fill="none"/></svg>
<svg class="a" style="left:67.5px;top:143.5px;" width="12" height="9" viewBox="0 0 12 9"><ellipse cx="5.5" cy="4.3" rx="4.8" ry="2.8" fill="#d4d4d4" stroke="#2a2a2a" stroke-width="0.7"/><circle cx="5.5" cy="4.3" r="1.5" fill="#444"/><path d="M0.8 2.8Q5.5 -1.2 10.2 2.8" stroke="#222" stroke-width="0.8" fill="none"/><path d="M8.5 6L11.5 8.8" stroke="#111" stroke-width="1.2"/></svg>
<div class="a" style="left:86px;top:140.5px;width:94px;height:14.5px;background:#fff;border:1px solid #c8c8c8;"></div>
<div class="a" style="left:169.5px;top:141.5px;width:9.5px;height:12.5px;background:#525252;border:1px solid #5e5e5e;"></div>
<svg class="a" style="left:171.9px;top:146.6px;" width="4.8" height="2.8" viewBox="0 0 4.8 2.8"><path d="M0 0H4.8 L2.4 2.8 Z" fill="#0c0c0c"/></svg>
<div class="t" style="left:88.2px;top:141.8px;font-size:8.95px;line-height:12px;color:#111;-webkit-text-stroke:0;">По умолчанию</div>
<svg class="a" style="left:185px;top:142px;" width="9" height="12" viewBox="0 0 9 12"><g fill="#5b94dc"><rect x="2" y="0.5" width="5" height="1.4"/><rect x="0" y="4" width="9" height="1.4"/><rect x="2" y="7.3" width="5" height="1.4"/><rect x="1" y="10.3" width="7" height="1.4"/></g></svg>
<svg class="a" style="left:205px;top:141.5px;" width="13" height="13" viewBox="0 0 13 13"><rect x="0.5" y="1" width="8" height="7.5" fill="#5b94dc"/><rect x="1.8" y="2.3" width="5.4" height="1.6" fill="#f3f7c8"/><rect x="1.8" y="5" width="5.4" height="1.6" fill="#f3f7c8"/><rect x="4.5" y="6" width="7.5" height="6" fill="#dcdcdc"/><path d="M7 11.5H12.5V7" stroke="#3aa84a" stroke-width="1.6" fill="none"/></svg>
<svg class="a" style="left:222.5px;top:141.5px;" width="13" height="13" viewBox="0 0 13 13"><rect x="0.5" y="1" width="8" height="7.5" fill="#b8b8b8"/><rect x="1.8" y="2.3" width="5.4" height="1.6" fill="#8a8a8a"/><rect x="1.8" y="5" width="5.4" height="1.6" fill="#8a8a8a"/><rect x="4.5" y="6" width="7.5" height="6" fill="#d8d8d8"/><path d="M7 11.5H12.5V7" stroke="#9a9a9a" stroke-width="1.6" fill="none"/></svg>
<svg class="a" style="left:244px;top:141px;" width="13" height="14" viewBox="0 0 13 14"><rect x="0" y="0.3" width="9.5" height="1.6" fill="#6ab0d8"/><rect x="1" y="3" width="8" height="10" fill="#4a4a4a" stroke="#5b94dc" stroke-width="1.1"/><rect x="1.6" y="3.6" width="2.6" height="8.8" fill="#d8e8f6"/><circle cx="9" cy="9.8" r="3.4" fill="#c4c4c4"/><circle cx="9" cy="9.8" r="1.3" fill="#5d5d5d"/></svg>
<div class="a" style="left:5px;top:159px;width:300px;height:424px;background:#5d5d5d;border:1px solid #939393;"></div>
<div class="a" style="left:5px;top:587px;width:300px;height:188.5px;background:#5d5d5d;border:1px solid #939393;"></div>
<div class="a" style="left:115px;top:564px;width:81px;height:12px;background:#e1e1e1;border:1px solid #c8c8c8;"></div>
<div class="t" style="left:140px;top:564px;font-size:8.87px;line-height:12px;color:#111;">Импорт</div>
<div class="a" style="left:1px;top:778px;width:308px;height:18px;background:#4a4a4a;"></div>
<div class="a" style="left:3px;top:779px;width:48.4px;height:16.5px;background:#4c4c4c;border:1px solid #6c6c6c;border-top:none;"></div>
<div class="t" style="left:9.6px;top:781px;font-size:9.1px;line-height:12px;color:#c4c4c4;">Альбомы</div>
<div class="a" style="left:52.5px;top:779px;width:47.9px;height:16.5px;background:#4c4c4c;border:1px solid #6c6c6c;border-top:none;"></div>
<div class="t" style="left:58.8px;top:781px;font-size:9.21px;line-height:12px;color:#c4c4c4;">Объекты</div>
<div class="a" style="left:101.5px;top:779px;width:48.5px;height:16.5px;background:#4c4c4c;border:1px solid #6c6c6c;border-top:none;"></div>
<div class="t" style="left:108.4px;top:781px;font-size:8.86px;line-height:12px;color:#c4c4c4;">Менед...</div>
<div class="a" style="left:151.2px;top:779px;width:48.8px;height:16.5px;background:#4c4c4c;border:1px solid #6c6c6c;border-top:none;"></div>
<div class="t" style="left:157.6px;top:781px;font-size:8.55px;line-height:12px;letter-spacing:-0.13px;color:#c4c4c4;">База эле...</div>
<div class="a" style="left:201.2px;top:779px;width:24.9px;height:16.5px;background:#4c4c4c;border:1px solid #6c6c6c;border-top:none;"></div>
<div class="t" style="left:207.5px;top:781px;font-size:8.55px;line-height:12px;letter-spacing:-1.3px;color:#c4c4c4;">BCF</div>
<div class="a" style="left:227.3px;top:779px;width:48.1px;height:16.5px;background:#4c4c4c;border:1px solid #6c6c6c;border-top:none;"></div>
<div class="t" style="left:233.7px;top:781px;font-size:8.93px;line-height:12px;color:#c4c4c4;">Свойства</div>
<div class="a" style="left:276px;top:778px;width:25px;height:16.5px;background:#808080;"></div>
<div class="t" style="left:283.2px;top:781px;font-size:8.36px;line-height:12px;letter-spacing:-0.33px;color:#fff;">IFC</div>
<div class="a" style="left:314.5px;top:120px;width:79px;height:14.5px;background:#4f4f4f;border:1px solid #686868;border-bottom:none;"></div>
<div class="t" style="left:330.8px;top:121px;font-size:9.23px;line-height:12px;color:#c2c2c2;">Без имени0*</div>
<div class="a" style="left:394.5px;top:120px;width:122px;height:14.5px;background:#4f4f4f;border:1px solid #686868;border-bottom:none;"></div>
<div class="t" style="left:400.8px;top:121px;font-size:9.5px;line-height:12px;letter-spacing:0.09px;color:#c2c2c2;">Менеджер проектов.dwg*</div>
<div class="a" style="left:516px;top:119.5px;width:154.5px;height:15.5px;background:#7f7f7f;"></div>
<div class="t" style="left:532.7px;top:121px;font-size:9.5px;line-height:12px;letter-spacing:0.13px;color:#fff;">Менеджер проектов.dwg*</div>
<svg class="a" style="left:660.5px;top:124px;" width="7" height="7" viewBox="0 0 7 7"><path d="M0.5 0.5L6.5 6.5M6.5 0.5L0.5 6.5" stroke="#f0f0f0" stroke-width="1.1"/></svg>
<svg class="a" style="left:1545.5px;top:125.25px;" width="8" height="4.5" viewBox="0 0 8 4.5"><path d="M0 0H8 L4 4.5 Z" fill="#e6e6e6"/></svg>
<div class="a" style="left:314px;top:135px;width:1243.5px;height:643.5px;background:#282828;border:1px solid #6e6e6e;border-top:1px solid #5a5a5a;"></div>
<div class="a" style="left:321px;top:140.5px;width:20.5px;height:12.5px;background:#a3a3a3;border-radius:6.5px;"></div>
<div class="t" style="left:328.86px;top:140.6px;font-size:8px;line-height:12px;color:#f4f4f4;">+</div>
<div class="a" style="left:344.7px;top:140.5px;width:43.3px;height:12.5px;background:#5c5c5c;border-radius:6.5px;"></div>
<div class="t" style="left:351.5px;top:140.8px;font-size:8.97px;line-height:12px;color:#f0f0f0;">Сверху</div>
<div class="a" style="left:391.7px;top:140.5px;width:58.3px;height:12.5px;background:#5c5c5c;border-radius:6.5px;"></div>
<div class="t" style="left:399.5px;top:140.8px;font-size:9px;line-height:12px;color:#f0f0f0;">2D-каркас</div>
<svg class="a" style="left:340px;top:618px;" width="135" height="135" viewBox="0 0 135 135"><g stroke="#f2f2f2" stroke-width="1.15" fill="none"><path d="M15.5 51V110.5"/><path d="M15.5 28L9.5 50.5H21.5Z"/><path d="M15.5 36V50"/><rect x="6.5" y="110.5" width="18" height="18"/><path d="M24.5 119.5H84"/><path d="M107 119.5L84 113.5V125.5Z"/><path d="M84 119.5H97"/><path d="M10.5 4.5L15 10L19.5 4.5M15 10V15.5"/><path d="M120.3 115L129.5 124.5M129.5 115L120.3 124.5"/></g></svg>
<svg class="a" style="left:1405px;top:145px;" width="143" height="143" viewBox="0 0 143 143"><g stroke="#8c8c8c" stroke-width="0.9" fill="none"><circle cx="71.4" cy="71.2" r="66.5"/><circle cx="71.4" cy="71.2" r="33.4"/><path d="M71.4 4.7V137.7M4.9 71.2H137.9"/></g><circle cx="71.4" cy="71.2" r="4.6" fill="#b08253"/></svg>
<div class="a" style="left:1453.6px;top:283.8px;width:44.4px;height:12px;background:#4a4a4a;border-radius:6.5px;"></div>
<div class="t" style="left:1461.5px;top:284px;font-size:8.67px;line-height:12px;color:#a8a8a8;">Сверху</div>
<div class="a" style="left:314px;top:779px;width:1243.5px;height:16px;background:#4a4a4a;border:1px solid #6e6e6e;border-top:none;"></div>
<svg class="a" style="left:317px;top:780px;" width="13" height="13" viewBox="0 0 13 13"><rect x="0.5" y="0.5" width="12" height="12" fill="#4a4a4a" stroke="#d8d8d8" stroke-width="1"/><rect x="0.5" y="3.5" width="12" height="3" fill="#6aa6ec"/><path d="M0.5 3.5H12.5M0.5 6.5H12.5M0.5 9.5H12.5" stroke="#d8d8d8" stroke-width="0.9"/></svg>
<div class="a" style="left:344px;top:780px;width:47px;height:14px;background:#808080;"></div>
<div class="t" style="left:350.7px;top:781px;font-size:9.25px;line-height:12px;color:#fff;">Модель</div>
<div class="a" style="left:391px;top:780px;width:168px;height:14px;background:#505050;border:1px solid #707070;"></div>
<div class="t" style="left:397.4px;top:781px;font-size:9.49px;line-height:12px;color:#c2c2c2;">Схема работ по сооружению опор</div>
<div class="a" style="left:435px;top:160.5px;width:628px;height:522.4px;background:#f0f0f0;border-radius:7px;box-shadow:0 0 0 0.5px rgba(20,20,20,0.5),0 5px 16px 2px rgba(0,0,0,0.4);overflow:hidden;"><div class="a" style="left:0px;top:0px;width:629px;height:24.5px;background:#f1f1f1;"></div><div class="a" style="left:0px;top:24.5px;width:629px;height:15px;background:#ffffff;"></div></div>
<svg class="a" style="left:442.2px;top:165.8px;" width="12" height="13" viewBox="0 0 12 13"><defs><linearGradient id="lg3" x1="0" y1="0" x2="0" y2="1"><stop offset="0" stop-color="#56b8e6"/><stop offset="1" stop-color="#2f8fd0"/></linearGradient></defs><path d="M2.5 0.5H11.5V8.5Q11.5 12.5 7.5 12.5H0.5V2.5Q0.5 0.5 2.5 0.5Z" fill="url(#lg3)"/><path d="M4.3 2.8H8.3V6.2Q8.3 7.3 6.3 7.3Q4.3 7.3 4.3 6.2Z" fill="#f2f8fc"/><path d="M6.3 7.3V8.6Q8 9.2 7.3 10.6Q6.3 11.6 5 10.6" fill="none" stroke="#f2f8fc" stroke-width="1.1"/></svg>
<div class="t n" style="left:459.3px;top:167.1px;font-size:9.44px;line-height:12px;color:#111;">Строительная площадка 3</div>
<div class="a" style="left:966.5px;top:172px;width:8.5px;height:1px;background:#c4c4c4;"></div>
<svg class="a" style="left:1002.5px;top:168px;" width="9" height="9" viewBox="0 0 9 9"><rect x="0.6" y="0.6" width="7.8" height="7.8" rx="0.8" fill="none" stroke="#222" stroke-width="1"/></svg>
<svg class="a" style="left:1040px;top:168px;" width="9.5" height="9.5" viewBox="0 0 9.5 9.5"><path d="M0.5 0.5L9 9M9 0.5L0.5 9" stroke="#222" stroke-width="1"/></svg>
<div class="t n" style="left:441.2px;top:187.7px;font-size:8.84px;line-height:12px;color:#111;">Вид</div>
<div class="t n" style="left:468.7px;top:187.7px;font-size:9.09px;line-height:12px;color:#111;">Вставка</div>
<div class="t n" style="left:514px;top:187.7px;font-size:9.5px;line-height:12px;letter-spacing:0.23px;color:#111;">Конструкция</div>
<div class="t n" style="left:583.2px;top:187.7px;font-size:9.5px;line-height:12px;letter-spacing:0.13px;color:#111;">Контур</div>
<div class="t n" style="left:625.8px;top:187.7px;font-size:9.5px;line-height:12px;letter-spacing:0.52px;color:#111;">Помощь</div>
<div class="a" style="left:442px;top:209px;width:197.5px;height:441px;background:#fff;border:1px solid #a8a8a8;"></div>
<div class="t n" style="left:447.5px;top:213.8px;font-size:8.85px;line-height:12px;color:#111;">Параметр</div>
<div class="t n" style="left:595.6px;top:213.8px;font-size:8.74px;line-height:12px;color:#111;">Значен...</div>
<div class="a" style="left:592px;top:210px;width:1px;height:20px;background:#e0e0e0;"></div>
<div class="a" style="left:443px;top:228.7px;width:193.4px;height:14.8px;background:linear-gradient(#f4f4f4,#e9e9e9);border-top:1px solid #dedede;border-bottom:1px solid #d6d6d6;"></div>
<svg class="a" style="left:446.3px;top:232.9px;" width="7.4" height="7.4" viewBox="0 0 7.4 7.4"><rect x="0.5" y="0.5" width="6.4" height="6.4" fill="#fff" stroke="#8e8e8e" stroke-width="0.9"/><path d="M2 3.7H5.4" stroke="#222" stroke-width="1"/></svg>
<div class="t n" style="left:458.7px;top:230.8px;font-size:9.26px;line-height:12px;color:#000;font-weight:700;">Основные</div>
<div class="a" style="left:444px;top:256.3px;width:192.4px;height:1px;background:#e2e2e2;"></div>
<div class="a" style="left:592px;top:243.5px;width:1px;height:13.8px;background:#e2e2e2;"></div>
<div class="t n" style="left:458.1px;top:244.6px;font-size:8.55px;line-height:12px;letter-spacing:-0.15px;color:#111;">Имя</div>
<div class="t n" style="left:593.8px;top:244.6px;font-size:9.19px;line-height:12px;color:#111;">Строит...</div>
<div class="a" style="left:444px;top:270.1px;width:192.4px;height:1px;background:#e2e2e2;"></div>
<div class="a" style="left:592px;top:257.3px;width:1px;height:13.8px;background:#e2e2e2;"></div>
<div class="t n" style="left:458.1px;top:258.4px;font-size:8.55px;line-height:12px;letter-spacing:-0.24px;color:#111;">Тип</div>
<div class="t n" style="left:593.8px;top:258.4px;font-size:9.19px;line-height:12px;color:#8f8f8f;">Строит...</div>
<div class="a" style="left:443px;top:270.1px;width:193.4px;height:14.8px;background:linear-gradient(#f4f4f4,#e9e9e9);border-top:1px solid #dedede;border-bottom:1px solid #d6d6d6;"></div>
<svg class="a" style="left:446.3px;top:274.3px;" width="7.4" height="7.4" viewBox="0 0 7.4 7.4"><rect x="0.5" y="0.5" width="6.4" height="6.4" fill="#fff" stroke="#8e8e8e" stroke-width="0.9"/><path d="M2 3.7H5.4" stroke="#222" stroke-width="1"/></svg>
<div class="t n" style="left:458.7px;top:272.2px;font-size:9.28px;line-height:12px;color:#000;font-weight:700;">Обозначение</div>
<div class="a" style="left:444px;top:297.7px;width:192.4px;height:1px;background:#e2e2e2;"></div>
<div class="a" style="left:592px;top:284.9px;width:1px;height:13.8px;background:#e2e2e2;"></div>
<div class="t n" style="left:458.1px;top:286px;font-size:9px;line-height:12px;color:#111;">Тип представления</div>
<div class="t n" style="left:593.8px;top:286px;font-size:9.11px;line-height:12px;color:#111;">Текст</div>
<div class="a" style="left:443px;top:297.7px;width:193.4px;height:14.8px;background:linear-gradient(#f4f4f4,#e9e9e9);border-top:1px solid #dedede;border-bottom:1px solid #d6d6d6;"></div>
<svg class="a" style="left:446.3px;top:301.9px;" width="7.4" height="7.4" viewBox="0 0 7.4 7.4"><rect x="0.5" y="0.5" width="6.4" height="6.4" fill="#fff" stroke="#8e8e8e" stroke-width="0.9"/><path d="M2 3.7H5.4" stroke="#222" stroke-width="1"/></svg>
<div class="t n" style="left:458.7px;top:299.8px;font-size:9.21px;line-height:12px;color:#000;font-weight:700;">Проект</div>
<div class="a" style="left:444px;top:325.3px;width:192.4px;height:1px;background:#e2e2e2;"></div>
<div class="a" style="left:592px;top:312.5px;width:1px;height:13.8px;background:#e2e2e2;"></div>
<div class="t n" style="left:458.1px;top:313.6px;font-size:8.71px;line-height:12px;color:#111;">Проект</div>
<div class="t n" style="left:593.8px;top:313.6px;font-size:9.19px;line-height:12px;color:#111;">D:\Distr...</div>
<div class="a" style="left:444px;top:339.1px;width:192.4px;height:1px;background:#e2e2e2;"></div>
<div class="a" style="left:592px;top:326.3px;width:1px;height:13.8px;background:#e2e2e2;"></div>
<div class="t n" style="left:458.1px;top:327.4px;font-size:8.68px;line-height:12px;color:#111;">Номер</div>
<div class="t n" style="left:593.8px;top:327.4px;font-size:8.55px;line-height:12px;color:#111;">3</div>
<div class="a" style="left:444px;top:352.9px;width:192.4px;height:1px;background:#e2e2e2;"></div>
<div class="a" style="left:592px;top:340.1px;width:1px;height:13.8px;background:#e2e2e2;"></div>
<div class="t n" style="left:458.1px;top:341.2px;font-size:9.04px;line-height:12px;color:#111;">Включать в экспликацию</div>
<div class="a" style="left:593.3px;top:341.3px;width:10.4px;height:10.4px;background:#fff;border:1px solid #b4b4b4;border-radius:1.5px;"></div>
<div class="t n" style="left:606.8px;top:341.2px;font-size:8.63px;line-height:12px;color:#111;">Нет</div>
<div class="a" style="left:443px;top:352.9px;width:193.4px;height:14.8px;background:linear-gradient(#f4f4f4,#e9e9e9);border-top:1px solid #dedede;border-bottom:1px solid #d6d6d6;"></div>
<svg class="a" style="left:446.3px;top:357.1px;" width="7.4" height="7.4" viewBox="0 0 7.4 7.4"><rect x="0.5" y="0.5" width="6.4" height="6.4" fill="#fff" stroke="#8e8e8e" stroke-width="0.9"/><path d="M2 3.7H5.4" stroke="#222" stroke-width="1"/></svg>
<div class="t n" style="left:458.7px;top:355px;font-size:9.24px;line-height:12px;color:#000;font-weight:700;">Графика</div>
<div class="a" style="left:444px;top:380.5px;width:192.4px;height:1px;background:#e2e2e2;"></div>
<div class="a" style="left:592px;top:367.7px;width:1px;height:13.8px;background:#e2e2e2;"></div>
<div class="t n" style="left:458.1px;top:368.8px;font-size:8.87px;line-height:12px;color:#111;">Штриховка</div>
<div class="t n" style="left:593.8px;top:368.8px;font-size:9.02px;line-height:12px;color:#111;">Нет</div>
<div class="a" style="left:444px;top:394.3px;width:192.4px;height:1px;background:#e2e2e2;"></div>
<div class="a" style="left:592px;top:381.5px;width:1px;height:13.8px;background:#e2e2e2;"></div>
<div class="t n" style="left:458.1px;top:382.6px;font-size:9.04px;line-height:12px;color:#111;">Перекрывать примитивы</div>
<div class="a" style="left:593.3px;top:382.7px;width:10.4px;height:10.4px;background:#fff;border:1px solid #b4b4b4;border-radius:1.5px;"></div>
<div class="t n" style="left:606.8px;top:382.6px;font-size:8.63px;line-height:12px;color:#111;">Нет</div>
<div class="a" style="left:444px;top:408.1px;width:192.4px;height:1px;background:#e2e2e2;"></div>
<div class="a" style="left:592px;top:395.3px;width:1px;height:13.8px;background:#e2e2e2;"></div>
<div class="t n" style="left:458.1px;top:396.4px;font-size:9.02px;line-height:12px;color:#8f8f8f;">Отображать размеры</div>
<div class="a" style="left:593.3px;top:396.5px;width:10.4px;height:10.4px;background:#fff;border:1px solid #b4b4b4;border-radius:1.5px;"></div>
<div class="t n" style="left:606.8px;top:396.4px;font-size:8.63px;line-height:12px;color:#8f8f8f;">Нет</div>
<div class="a" style="left:443px;top:408.1px;width:193.4px;height:14.8px;background:linear-gradient(#f4f4f4,#e9e9e9);border-top:1px solid #dedede;border-bottom:1px solid #d6d6d6;"></div>
<svg class="a" style="left:446.3px;top:412.3px;" width="7.4" height="7.4" viewBox="0 0 7.4 7.4"><rect x="0.5" y="0.5" width="6.4" height="6.4" fill="#fff" stroke="#8e8e8e" stroke-width="0.9"/><path d="M2 3.7H5.4" stroke="#222" stroke-width="1"/></svg>
<div class="t n" style="left:458.7px;top:410.2px;font-size:9.26px;line-height:12px;color:#000;font-weight:700;">Геометрия</div>
<div class="a" style="left:444px;top:435.7px;width:192.4px;height:1px;background:#e2e2e2;"></div>
<div class="a" style="left:592px;top:422.9px;width:1px;height:13.8px;background:#e2e2e2;"></div>
<div class="t n" style="left:458.1px;top:424px;font-size:8.81px;line-height:12px;color:#4a7ac4;">Длина, м</div>
<div class="t n" style="left:593.8px;top:424px;font-size:9.19px;line-height:12px;color:#4a7ac4;">&lt;Указа...</div>
<div class="a" style="left:444px;top:449.5px;width:192.4px;height:1px;background:#e2e2e2;"></div>
<div class="a" style="left:592px;top:436.7px;width:1px;height:13.8px;background:#e2e2e2;"></div>
<div class="t n" style="left:458.1px;top:437.8px;font-size:8.86px;line-height:12px;color:#4a7ac4;">Ширина, м</div>
<div class="t n" style="left:593.8px;top:437.8px;font-size:9.19px;line-height:12px;color:#4a7ac4;">&lt;Указа...</div>
<div class="a" style="left:444px;top:463.3px;width:192.4px;height:1px;background:#e2e2e2;"></div>
<div class="a" style="left:592px;top:450.5px;width:1px;height:13.8px;background:#e2e2e2;"></div>
<div class="t n" style="left:458.1px;top:451.6px;font-size:8.91px;line-height:12px;color:#4a7ac4;">Периметр, м</div>
<div class="t n" style="left:593.8px;top:451.6px;font-size:8.55px;line-height:12px;color:#555;">0</div>
<div class="a" style="left:444px;top:477.1px;width:192.4px;height:1px;background:#e2e2e2;"></div>
<div class="a" style="left:592px;top:464.3px;width:1px;height:13.8px;background:#e2e2e2;"></div>
<div class="t n" style="left:458.1px;top:465.4px;font-size:9.06px;line-height:12px;color:#4a7ac4;">Площадь проезжей части, м2</div>
<div class="t n" style="left:593.8px;top:465.4px;font-size:8.55px;line-height:12px;color:#555;">0</div>
<div class="a" style="left:444px;top:490.9px;width:192.4px;height:1px;background:#e2e2e2;"></div>
<div class="a" style="left:592px;top:478.1px;width:1px;height:13.8px;background:#e2e2e2;"></div>
<div class="t n" style="left:458.1px;top:479.2px;font-size:9.04px;line-height:12px;color:#4a7ac4;">Непокрытая площадь, м2</div>
<div class="t n" style="left:593.8px;top:479.2px;font-size:8.55px;line-height:12px;color:#4a7ac4;">0</div>
<div class="a" style="left:443px;top:490.9px;width:193.4px;height:14.8px;background:linear-gradient(#f4f4f4,#e9e9e9);border-top:1px solid #dedede;border-bottom:1px solid #d6d6d6;"></div>
<svg class="a" style="left:446.3px;top:495.1px;" width="7.4" height="7.4" viewBox="0 0 7.4 7.4"><rect x="0.5" y="0.5" width="6.4" height="6.4" fill="#fff" stroke="#8e8e8e" stroke-width="0.9"/><path d="M2 3.7H5.4" stroke="#222" stroke-width="1"/></svg>
<div class="t n" style="left:458.7px;top:493px;font-size:9.31px;line-height:12px;color:#000;font-weight:700;">Параметры раскладки</div>
<div class="a" style="left:444px;top:518.5px;width:192.4px;height:1px;background:#e2e2e2;"></div>
<div class="a" style="left:592px;top:505.7px;width:1px;height:13.8px;background:#e2e2e2;"></div>
<div class="t n" style="left:458.1px;top:506.8px;font-size:9.05px;line-height:12px;color:#111;">Коэффициент перекрытия</div>
<div class="t n" style="left:593.8px;top:506.8px;font-size:8.95px;line-height:12px;color:#111;">0.1</div>
<div class="a" style="left:444px;top:532.3px;width:192.4px;height:1px;background:#e2e2e2;"></div>
<div class="a" style="left:592px;top:519.5px;width:1px;height:13.8px;background:#e2e2e2;"></div>
<div class="t n" style="left:458.1px;top:520.6px;font-size:9.01px;line-height:12px;color:#111;">Этап строительства</div>
<div class="t n" style="left:593.8px;top:520.6px;font-size:8.55px;line-height:12px;color:#111;">1</div>
<div class="a" style="left:444px;top:546.1px;width:192.4px;height:1px;background:#e2e2e2;"></div>
<div class="a" style="left:592px;top:533.3px;width:1px;height:13.8px;background:#e2e2e2;"></div>
<div class="t n" style="left:458.1px;top:534.4px;font-size:9.07px;line-height:12px;color:#111;">Процент оборачиваемости 1, %</div>
<div class="t n" style="left:593.8px;top:534.4px;font-size:8.86px;line-height:12px;color:#111;">30</div>
<div class="a" style="left:444px;top:559.9px;width:192.4px;height:1px;background:#e2e2e2;"></div>
<div class="a" style="left:592px;top:547.1px;width:1px;height:13.8px;background:#e2e2e2;"></div>
<div class="t n" style="left:458.1px;top:548.2px;font-size:9.07px;line-height:12px;color:#111;">Процент оборачиваемости 2, %</div>
<div class="t n" style="left:593.8px;top:548.2px;font-size:8.55px;line-height:12px;color:#111;">5</div>
<div class="a" style="left:636px;top:229.7px;width:1px;height:331.2px;background:#d4d4d4;"></div>
<svg class="a" style="left:445.5px;top:659.5px;" width="12" height="12" viewBox="0 0 12 12"><circle cx="6" cy="6" r="5.4" fill="#b6dcf8" stroke="#5aa6e0" stroke-width="0.9"/></svg>
<div class="t n" style="left:448.9px;top:659.7px;font-size:8.5px;line-height:12px;color:#1c3c5c;font-weight:700;">?</div>
<svg class="a" style="left:463px;top:658.5px;" width="14.5" height="14" viewBox="0 0 14.5 14"><rect x="0.5" y="1.5" width="10" height="11" fill="#fff" stroke="#555" stroke-width="1"/><rect x="0.5" y="0.5" width="10" height="2.6" fill="#4aa8e8"/><rect x="2" y="4.5" width="2" height="1.5" fill="#4aa8e8"/><circle cx="9.5" cy="9.5" r="4" fill="#9a9a9a"/><circle cx="9.5" cy="9.5" r="1.5" fill="#e8e8e8"/></svg>
<svg class="a" style="left:482.9px;top:658.5px;" width="12.5" height="13" viewBox="0 0 12.5 13"><rect x="0.5" y="0.5" width="11" height="12" fill="#fff" stroke="#555" stroke-width="1"/><rect x="2.3" y="2.2" width="7" height="2.2" fill="#444"/><circle cx="8.2" cy="8.8" r="2.6" fill="none" stroke="#d04040" stroke-width="1.1"/><path d="M6.4 10.6L10 7" stroke="#d04040" stroke-width="1"/></svg>
<div class="t n" style="left:645.5px;top:208.5px;font-size:9.5px;line-height:12px;letter-spacing:0.02px;color:#111;">Класификатор</div>
<div class="t n" style="left:789.3px;top:208.5px;font-size:8.92px;line-height:12px;color:#111;">Поиск:</div>
<div class="a" style="left:822.2px;top:207px;width:144.5px;height:14.5px;background:#fff;border-bottom:1px solid #9a9a9a;border-radius:2px;"></div>
<div class="t n" style="left:987.8px;top:208.5px;font-size:8.99px;line-height:12px;color:#111;">13</div>
<svg class="a" style="left:1021.5px;top:209px;" width="11" height="9" viewBox="0 0 11 9"><path d="M5.5 0L11 5.5H8V9H3V5.5H0Z" fill="#6e6e6e"/></svg>
<svg class="a" style="left:1040.5px;top:209px;" width="11" height="9" viewBox="0 0 11 9"><path d="M5.5 9L11 3.5H8V0H3V3.5H0Z" fill="#6e6e6e"/></svg>
<div class="a" style="left:646px;top:225px;width:409.8px;height:183px;background:#fff;border:1px solid #b4b4b4;border-left:2px solid #8c8c8c;border-top-color:#7c7c7c;overflow:hidden;"><div class="a" style="left:-1px;top:0"><div class="a" style="left:1px;top:0px;width:392.5px;height:19.5px;background:#cccccc;"></div><svg class="a" style="left:6.7px;top:8px;" width="5.5" height="5.5" viewBox="0 0 5.5 5.5"><path d="M5.5 0V5.5H0Z" fill="#222"/></svg><div class="a" style="left:1.5px;top:20.2px;width:86px;height:114.2px;background:#f0f0f0;border:1px solid #dadada;border-radius:3px;"></div><div class="a" style="left:4.2px;top:26.6px;width:81px;height:81px;background:#9b9b9b;"></div><svg class="a" style="left:33px;top:55px;" width="25" height="25" viewBox="0 0 25 25"><path d="M22.8 6.5V1H6.7V13H0.5V23H14.5" fill="none" stroke="#4a6a92" stroke-width="1"/><path d="M18.5 5.5L21 9.5H16Z" fill="none" stroke="#e07474" stroke-width="0.9"/><path d="M18.5 9.5V18" stroke="#e07474" stroke-width="0.9"/><path d="M15.7 18H21.3Q21 21.5 18.5 21.5Q16 21.5 15.7 18Z" fill="#e07474"/></svg><div class="a" style="left:92.6px;top:26.6px;width:81px;height:81px;background:#9b9b9b;"></div><svg class="a" style="left:121px;top:54.3px;" width="25" height="25" viewBox="0 0 25 25"><circle cx="12" cy="12" r="11.6" fill="none" stroke="#e07474" stroke-width="1"/><path d="M6.5 13V11.5L8.5 7.5H15.5L17.5 11.5V13" fill="none" stroke="#e07474" stroke-width="1.3"/><rect x="6" y="12.3" width="12" height="2.6" fill="#e07474"/><circle cx="8.6" cy="16.6" r="1.7" fill="#111"/><circle cx="15.4" cy="16.6" r="1.7" fill="#111"/></svg><div class="a" style="left:181px;top:26.6px;width:81px;height:81px;background:#9b9b9b;"></div><svg class="a" style="left:209.3px;top:55px;" width="25" height="25" viewBox="0 0 25 25"><path d="M22.8 6.5V1H6.7V13H0.5V23H14.5" fill="none" stroke="#4a6a92" stroke-width="1"/><path d="M15.2 8.5V12.5Q15.2 14 16.8 14.5V24H20.2V14.5Q21.8 14 21.8 12.5V8.5H20V12H17V8.5Z" fill="#e07474"/></svg><div class="a" style="left:269.4px;top:26.6px;width:81px;height:81px;background:#9b9b9b;"></div><svg class="a" style="left:298px;top:55px;" width="25" height="25" viewBox="0 0 25 25"><path d="M22.8 6.5V1H6.7V13H0.5V23H14.5" fill="none" stroke="#4a6a92" stroke-width="1"/><circle cx="17.3" cy="15.2" r="5.8" fill="#0a0a0a"/><circle cx="17.3" cy="15.2" r="1.6" fill="#777"/></svg><div class="a" style="left:4.2px;top:142.9px;width:81px;height:81px;background:#9b9b9b;"></div><svg class="a" style="left:32.6px;top:170.8px;" width="25" height="16" viewBox="0 0 25 16"><rect x="0.5" y="0.5" width="24" height="15" fill="none" stroke="#4a6a92" stroke-width="1"/><path d="M0.5 0.5L8 7H17L24.5 0.5M8 7V15.5M17 7V15.5" fill="none" stroke="#4a6a92" stroke-width="1"/></svg><div class="a" style="left:92.6px;top:142.9px;width:81px;height:81px;background:#9b9b9b;"></div><svg class="a" style="left:132px;top:172.5px;" width="9" height="10" viewBox="0 0 9 10"><path d="M0.5 0L8.5 4.5L0.5 9Z" fill="#e07474"/></svg><div class="a" style="left:400px;top:14.2px;width:1.6px;height:35.7px;background:#7a7a7a;"></div></div></div>
<div class="t n" style="left:663.6px;top:229.2px;font-size:8.89px;line-height:12px;color:#111;">Площадки</div>
<div class="t n" style="left:660.7px;top:333.8px;font-size:9.09px;line-height:12px;color:#111;">Строительная</div>
<div class="t n" style="left:669.2px;top:344.2px;font-size:9.14px;line-height:12px;color:#111;">площадка</div>
<div class="t n" style="left:743.8px;top:333.8px;font-size:9.29px;line-height:12px;color:#111;">Стоянка техники</div>
<div class="t n" style="left:835.4px;top:333.8px;font-size:8.64px;line-height:12px;color:#111;">Ремонтная зона</div>
<div class="t n" style="left:930.7px;top:333.8px;font-size:8.8px;line-height:12px;color:#111;">Мойка колес</div>
<div class="t n" style="left:645.9px;top:413.8px;font-size:8.74px;line-height:12px;color:#111;">Перечень материалов</div>
<div class="a" style="left:646px;top:430px;width:409.8px;height:120px;background:#fff;border:1px solid #b4b4b4;border-left-color:#a4a4a4;border-top-color:#8a8a8a;overflow:hidden;"><div class="a" style="left:0.5px;top:31px;width:17.9px;height:87px;background:#f0f0f0;"></div><div class="a" style="left:392.3px;top:-0.2px;width:15px;height:118px;background:#f0f0f0;"></div><div class="a" style="left:400.6px;top:14.3px;width:1.6px;height:77px;background:#7a7a7a;"></div><div class="a" style="left:18.4px;top:-0.2px;width:1px;height:118px;background:#d2d2d2;"></div><div class="a" style="left:242.8px;top:-0.2px;width:1px;height:118px;background:#d2d2d2;"></div><div class="a" style="left:317.2px;top:-0.2px;width:1px;height:118px;background:#d2d2d2;"></div><div class="a" style="left:392.3px;top:-0.2px;width:1px;height:118px;background:#d2d2d2;"></div><div class="a" style="left:18.4px;top:44px;width:224.4px;height:1px;background:#d2d2d2;"></div><div class="a" style="left:18.4px;top:58px;width:224.4px;height:1px;background:#d2d2d2;"></div><div class="a" style="left:0.5px;top:72px;width:391.8px;height:1px;background:#d2d2d2;"></div><div class="a" style="left:0.5px;top:86px;width:391.8px;height:1px;background:#d2d2d2;"></div><div class="a" style="left:0.5px;top:100px;width:391.8px;height:1px;background:#d2d2d2;"></div><div class="a" style="left:0.5px;top:113px;width:391.8px;height:1px;background:#d2d2d2;"></div></div>
<div class="t n" style="left:651.5px;top:440.5px;font-size:8.55px;line-height:12px;color:#111;">№</div>
<div class="t n" style="left:756.9px;top:440.3px;font-size:8.84px;line-height:12px;color:#111;">Материал</div>
<div class="t n" style="left:907.5px;top:436px;font-size:9.05px;line-height:12px;color:#111;">Толщина,</div>
<div class="t n" style="left:921.75px;top:446.9px;font-size:8.55px;line-height:12px;letter-spacing:-0.26px;color:#111;">мм</div>
<div class="t n" style="left:986.45px;top:436px;font-size:9.01px;line-height:12px;color:#111;">Общее</div>
<div class="t n" style="left:969.2px;top:446.9px;font-size:9.1px;line-height:12px;color:#111;">количество, м3</div>
<div class="t n" style="left:667px;top:463.4px;font-size:8.9px;line-height:12px;color:#111;">Плиты ПДН серия 3.503.1-91</div>
<div class="t n" style="left:667px;top:477.3px;font-size:9.02px;line-height:12px;color:#111;">3.503.1-91.1-03(Основной вариант)</div>
<div class="t n" style="left:667px;top:490.9px;font-size:8.55px;line-height:12px;letter-spacing:-0.04px;color:#111;">ПДН-А V</div>
<div class="t n" style="left:667px;top:504.7px;font-size:8.81px;line-height:12px;color:#111;">Песок</div>
<div class="t n" style="left:667px;top:518.6px;font-size:8.93px;line-height:12px;color:#111;">Гравий</div>
<div class="t n" style="left:667px;top:532.5px;font-size:9.45px;line-height:12px;color:#111;">Грунт</div>
<div class="t n" style="left:650.5px;top:477.3px;font-size:8.55px;line-height:12px;color:#111;">1</div>
<div class="t n" style="left:650.3px;top:504.7px;font-size:9.5px;line-height:12px;color:#111;">2</div>
<div class="t n" style="left:650.3px;top:518.6px;font-size:9.5px;line-height:12px;color:#111;">3</div>
<div class="t n" style="left:650.3px;top:532.5px;font-size:9.5px;line-height:12px;color:#111;">4</div>
<div class="t n" style="left:892.1px;top:477.3px;font-size:8.55px;line-height:12px;letter-spacing:-0.18px;color:#111;">140</div>
<div class="t n" style="left:966.5px;top:477.3px;font-size:9.5px;line-height:12px;color:#111;">0</div>
<div class="t n" style="left:892.1px;top:504.7px;font-size:8.55px;line-height:12px;letter-spacing:-0.03px;color:#111;">200</div>
<svg class="a" style="left:966.3px;top:504.7px;" width="12" height="12.5" viewBox="0 0 12 12.5"><path d="M6 1H0.8L3.6 4.2L0.8 7.5H6" fill="none" stroke="#2a5cb0" stroke-width="1.2"/><path d="M10 2.5L5.3 8.2H7.8L5.8 12L11.3 6.2H8.6Z" fill="#e8a818" stroke="#e8a818" stroke-width="0.5"/></svg>
<div class="t n" style="left:978.5px;top:505px;font-size:9.5px;line-height:12px;color:#111;">0</div>
<div class="t n" style="left:892.1px;top:518.6px;font-size:8.55px;line-height:12px;letter-spacing:-0.03px;color:#111;">200</div>
<svg class="a" style="left:966.3px;top:518.6px;" width="12" height="12.5" viewBox="0 0 12 12.5"><path d="M6 1H0.8L3.6 4.2L0.8 7.5H6" fill="none" stroke="#2a5cb0" stroke-width="1.2"/><path d="M10 2.5L5.3 8.2H7.8L5.8 12L11.3 6.2H8.6Z" fill="#e8a818" stroke="#e8a818" stroke-width="0.5"/></svg>
<div class="t n" style="left:978.5px;top:518.9px;font-size:9.5px;line-height:12px;color:#111;">0</div>
<div class="t n" style="left:892.1px;top:532.5px;font-size:8.55px;line-height:12px;letter-spacing:-0.03px;color:#111;">200</div>
<svg class="a" style="left:966.3px;top:532.5px;" width="12" height="12.5" viewBox="0 0 12 12.5"><path d="M6 1H0.8L3.6 4.2L0.8 7.5H6" fill="none" stroke="#2a5cb0" stroke-width="1.2"/><path d="M10 2.5L5.3 8.2H7.8L5.8 12L11.3 6.2H8.6Z" fill="#e8a818" stroke="#e8a818" stroke-width="0.5"/></svg>
<div class="t n" style="left:978.5px;top:532.8px;font-size:9.5px;line-height:12px;color:#111;">0</div>
<div class="a" style="left:646px;top:556px;width:409.8px;height:95px;background:#fff;border:1px solid #b4b4b4;border-left-color:#8c8c8c;border-top-color:#8c8c8c;"><div class="a" style="left:2px;top:62px;width:88.8px;height:11.5px;background:#e6e6e6;"></div></div>
<svg class="a" style="left:684px;top:559px;" width="20" height="58" viewBox="0 0 20 58"><path d="M0.5 0.5H18.5V4.5L17.5 5V7L18.5 7.5V49.5L17.5 50V52L18.5 52.5V56.5H0.5Z" fill="#fff" stroke="#1c1c1c" stroke-width="1"/><path d="M1.5 1.5H14" stroke="#7a9ac0" stroke-width="0.7" stroke-dasharray="1.5 1"/></svg>
<svg class="a" style="left:757px;top:578px;" width="58" height="20" viewBox="0 0 58 20"><path d="M0.5 0.5H4.5L5 1.5H7L7.5 0.5H49.5L50 1.5H52L52.5 0.5H56.5V18.5H52.5L52 17.5H50L49.5 18.5H7.5L7 17.5H5L4.5 18.5H0.5Z" fill="#fff" stroke="#1c1c1c" stroke-width="1"/></svg>
<div class="t n" style="left:650.8px;top:618.9px;font-size:9.07px;line-height:12px;color:#111;">Одна плита поперёк</div>
<div class="t n" style="left:747.3px;top:618.9px;font-size:8.94px;line-height:12px;color:#111;">Одна плита вдоль</div>
<div class="a" style="left:996.6px;top:657.2px;width:58.6px;height:17.8px;background:#fdfdfd;border:1px solid #4a88c4;border-radius:3px;"></div>
<div class="t n" style="left:1019.4px;top:660.3px;font-size:8.17px;line-height:12px;color:#111;">OK</div>
<div class="a" style="left:1px;top:801px;width:1557px;height:57px;background:#5d5d5d;"></div>
<div class="a" style="left:1px;top:801px;width:15px;height:57px;background:#808080;"></div>
<svg class="a" style="left:5px;top:806.5px;" width="6.5" height="6.5" viewBox="0 0 6.5 6.5"><path d="M0.5 0.5L6.5 6.5M6.5 0.5L0.5 6.5" stroke="#f4f4f4" stroke-width="1.3"/></svg>
<svg class="a" style="left:5px;top:822px;" width="6" height="8" viewBox="0 0 6 8"><path d="M1.3 0.5H4.7M1.8 0.5V4M4.2 0.5V4M0.3 4.3H5.7M3 4.5V7.5" stroke="#f0f0f0" stroke-width="0.9" fill="none"/><rect x="3" y="0.5" width="1.2" height="3.5" fill="#f0f0f0"/></svg>
<div class="t" style="left:-6.3px;top:838.2px;width:30px;height:10px;font-size:8.6px;line-height:10px;color:#e8e8e8;transform:rotate(-90deg);text-align:center;letter-spacing:-0.3px">Коман</div>
<div class="a" style="left:16px;top:803px;width:1541px;height:7px;overflow:hidden"><div class="t" style="left:2.5px;top:-3.6px;font-size:9.45px;line-height:12px;color:#dcdcdc;font-family:'Liberation Mono',monospace;-webkit-text-stroke:0;">Выберите параметры листа [Копировать/Удалить/Новый/Шаблон/Переименовать/Сохранить как/Установить/Чистая копия]&lt;Установить&gt;: У</div></div>
<div class="t" style="left:18.5px;top:810.1px;font-size:9.44px;line-height:12px;color:#dcdcdc;font-family:'Liberation Mono',monospace;-webkit-text-stroke:0;">Выберите лист для назначения текущим &lt;Схема работ по сооружению опор&gt;: Модель</div>
<div class="t" style="left:18.5px;top:821.2px;font-size:9.4px;line-height:12px;color:#dcdcdc;font-family:'Liberation Mono',monospace;-webkit-text-stroke:0;">spppr - Менеджер проектов</div>
<div class="t" style="left:18.5px;top:832.7px;font-size:9.42px;line-height:12px;color:#dcdcdc;font-family:'Liberation Mono',monospace;-webkit-text-stroke:0;">spbuildingarea - Площадка строительная</div>
<div class="a" style="left:16px;top:843.5px;width:1541.5px;height:14px;background:#5a5a5a;border-top:1px solid #4e4e4e;"></div>
<div class="t" style="left:18.5px;top:846.3px;font-size:9.26px;line-height:12px;color:#dcdcdc;font-family:'Liberation Mono',monospace;-webkit-text-stroke:0;">Команда:</div>
<div class="a" style="left:1px;top:857.5px;width:1557px;height:18px;background:#4a4a4a;"></div>
<div class="t" style="left:3px;top:861.4px;font-size:8.93px;line-height:12px;color:#f0f0f0;">346171,115483,0</div>
<div class="t" style="left:88.4px;top:861.4px;font-size:8.55px;line-height:12px;letter-spacing:-0.63px;color:#f0f0f0;">ШАГ</div>
<div class="t" style="left:121.4px;top:861.4px;font-size:8.55px;line-height:12px;letter-spacing:-0.6px;color:#f0f0f0;">СЕТКА</div>
<div class="a" style="left:154px;top:859px;width:64.3px;height:15.5px;background:#56647e;border:1px solid #7394c4;"></div>
<div class="t" style="left:161.8px;top:861.4px;font-size:8.55px;line-height:12px;letter-spacing:-0.12px;color:#f0f0f0;">оПРИВЯЗКА</div>
<div class="a" style="left:218.3px;top:859px;width:78.4px;height:15.5px;background:#56647e;border:1px solid #7394c4;"></div>
<div class="t" style="left:226px;top:861.4px;font-size:8.55px;line-height:12px;letter-spacing:-0.08px;color:#f0f0f0;">3D оПРИВЯЗКА</div>
<div class="a" style="left:296.7px;top:859px;width:68.8px;height:15.5px;background:#56647e;border:1px solid #7394c4;"></div>
<div class="t" style="left:303.8px;top:861.4px;font-size:8.55px;line-height:12px;letter-spacing:-0.21px;color:#f0f0f0;">ОТС-ОБЪЕКТ</div>
<div class="a" style="left:365.5px;top:859px;width:65px;height:15.5px;background:#56647e;border:1px solid #7394c4;"></div>
<div class="t" style="left:373px;top:861.4px;font-size:8.57px;line-height:12px;color:#f0f0f0;">ОТС-ПОЛЯР</div>
<div class="a" style="left:597px;top:859px;width:67.3px;height:15.5px;background:#56647e;border:1px solid #7394c4;"></div>
<div class="t" style="left:604.6px;top:861.4px;font-size:8.55px;line-height:12px;letter-spacing:-0.05px;color:#f0f0f0;">ШТРИХОВКА</div>
<div class="t" style="left:438.2px;top:861.4px;font-size:8.82px;line-height:12px;color:#f0f0f0;">ОРТО</div>
<div class="t" style="left:477.2px;top:861.4px;font-size:9.01px;line-height:12px;color:#f0f0f0;">ДИН-ВВОД</div>
<div class="t" style="left:537.8px;top:861.4px;font-size:9px;line-height:12px;color:#f0f0f0;">ИЗО</div>
<div class="t" style="left:574.6px;top:861.4px;font-size:8.55px;line-height:12px;letter-spacing:-1.19px;color:#f0f0f0;">ВЕС</div>
<div class="a" style="left:80px;top:860px;width:1px;height:14px;background:#5e5e5e;"></div>
<div class="a" style="left:113.5px;top:860px;width:1px;height:14px;background:#5e5e5e;"></div>
<div class="a" style="left:469.6px;top:860px;width:1px;height:14px;background:#5e5e5e;"></div>
<div class="a" style="left:530.6px;top:860px;width:1px;height:14px;background:#5e5e5e;"></div>
<div class="a" style="left:565.5px;top:860px;width:1px;height:14px;background:#5e5e5e;"></div>
<div class="t" style="left:1073.6px;top:861.4px;font-size:8.62px;line-height:12px;color:#f0f0f0;">МОДЕЛЬ</div>
<div class="a" style="left:1112px;top:860px;width:1px;height:14px;background:#5e5e5e;"></div>
<div class="a" style="left:1129px;top:860px;width:1px;height:14px;background:#5e5e5e;"></div>
<div class="a" style="left:1375.7px;top:860px;width:1px;height:14px;background:#5e5e5e;"></div>
<svg class="a" style="left:1114.5px;top:860.3px;" width="12" height="14" viewBox="0 0 12 14"><rect x="1" y="7.5" width="5" height="4" fill="none" stroke="#d8d8d8" stroke-width="1"/><path d="M2 7.5V6Q3.5 4 5 6V7.5" fill="none" stroke="#d8d8d8" stroke-width="0.9"/><rect x="6.5" y="4.5" width="4.5" height="3.5" fill="none" stroke="#d8d8d8" stroke-width="1"/><path d="M7.3 4.5V3Q8.8 1.2 10.2 3" fill="none" stroke="#d8d8d8" stroke-width="0.9"/></svg>
<svg class="a" style="left:1131px;top:860.3px;" width="12.5" height="14" viewBox="0 0 12.5 14"><rect x="0.5" y="1.5" width="10.5" height="8.5" fill="#ececec"/><path d="M4.5 10H11L7.8 13.3Z" fill="#ececec" stroke="#4a4a4a" stroke-width="0.6"/></svg>
<svg class="a" style="left:1222px;top:860.3px;" width="14" height="14" viewBox="0 0 14 14"><path d="M4 0.8Q7 0.8 7 3.8Q7 5.3 5.5 6.5V8H2.5V6.5Q1 5.3 1 3.8Q1 0.8 4 0.8Z" fill="#f6eca0"/><rect x="2.7" y="8.3" width="2.6" height="1.6" fill="#bbb"/><path d="M0.5 11.5H4M9 3H13V12.5H11" stroke="#cfcfcf" stroke-width="0.9" fill="none"/><path d="M7.5 6L12 10.5H10L10.8 12.8L9.7 13.2L8.9 11L7.5 12.3Z" fill="#fff" stroke="#222" stroke-width="0.5"/></svg>
<svg class="a" style="left:1242px;top:860.3px;" width="10" height="14" viewBox="0 0 10 14"><path d="M5 0.8Q9 0.8 9 4.8Q9 6.8 7 8.3V10H3V8.3Q1 6.8 1 4.8Q1 0.8 5 0.8Z" fill="#e6e6e6"/><rect x="3.2" y="10.4" width="3.6" height="2.4" fill="#9a9a9a"/></svg>
<div class="a" style="left:1256px;top:859px;width:24px;height:16px;background:#56647e;border:1px solid #7394c4;"></div>
<div class="a" style="left:1279.5px;top:859px;width:24px;height:16px;background:#56647e;border:1px solid #7394c4;"></div>
<svg class="a" style="left:1263.5px;top:860.6px;" width="13" height="13.4" viewBox="0 0 13 13.4"><path d="M4.5 2.5L9.2 7H7.2L8.3 10L7 10.5L5.9 7.6L4.5 9Z" fill="#fff" stroke="#222" stroke-width="0.4"/><circle cx="6.5" cy="6.7" r="5.6" fill="none" stroke="#d83a3a" stroke-width="1.3"/><path d="M2.6 10.6L10.4 2.8" stroke="#d83a3a" stroke-width="1.3"/></svg>
<svg class="a" style="left:1286.5px;top:860.3px;" width="14" height="14" viewBox="0 0 14 14"><path d="M2.5 1.5V12H13" stroke="#cfe0f4" stroke-width="1" fill="none"/><path d="M1 3L2.5 0.8L4 3M11.3 10.5L13.5 12L11.3 13.5" stroke="#cfe0f4" stroke-width="0.9" fill="none"/><path d="M10 1L6.5 6H8.8L7 10.2L11.3 4.8H9Z" fill="#e8eef8"/></svg>
<div class="t" style="left:1314.8px;top:861.4px;font-size:8.79px;line-height:12px;color:#f0f0f0;">m1:500 (мм)</div>
<svg class="a" style="left:1383px;top:860.3px;" width="12.5" height="14" viewBox="0 0 12.5 14"><path d="M3.2 6.5V2.2Q3.2 1.3 4 1.3Q4.8 1.3 4.8 2.2V1.4Q4.8 0.5 5.7 0.5Q6.5 0.5 6.5 1.4V2Q6.5 1.2 7.3 1.2Q8.2 1.2 8.2 2.1V3Q8.2 2.3 9 2.3Q9.8 2.3 9.8 3.2V9Q9.8 13 6.5 13Q4 13 3 11L0.7 7.3Q0.3 6.5 1 6.1Q1.7 5.8 2.3 6.5Z" fill="#fff"/><path d="M4.8 2.5V6M6.5 2.2V6M8.2 3.2V6" stroke="#666" stroke-width="0.5"/></svg>
<svg class="a" style="left:1408.5px;top:860.3px;" width="12.5" height="14" viewBox="0 0 12.5 14"><path d="M7.5 8L11.5 12.2" stroke="#5b94dc" stroke-width="2.2"/><circle cx="5" cy="5.5" r="4.2" fill="#eaf2fc" stroke="#d0dcec" stroke-width="0.9"/></svg>
<div class="a" style="left:1431px;top:860.5px;width:13.3px;height:13.6px;background:#5b94dc;"></div>
<svg class="a" style="left:1432.5px;top:861.05px;" width="11" height="12.5" viewBox="0 0 11 12.5"><circle cx="4.8" cy="5.3" r="3.4" fill="none" stroke="#fff" stroke-width="1.2"/><path d="M7.3 8L10.3 11.3" stroke="#fff" stroke-width="1.6"/></svg>
<svg class="a" style="left:1454px;top:860.3px;" width="14" height="14" viewBox="0 0 14 14"><path d="M0.6 8.5V1H11V5" fill="none" stroke="#8db9ee" stroke-width="1.2"/><path d="M0.6 8.5H4" stroke="#8db9ee" stroke-width="1.2"/><circle cx="8.3" cy="8.3" r="3" fill="#4a4a4a" stroke="#f0f0f0" stroke-width="1"/><path d="M10.5 10.7L13 13.3" stroke="#f0f0f0" stroke-width="1.5"/></svg>
<svg class="a" style="left:1478.5px;top:860.3px;" width="13" height="14" viewBox="0 0 13 14"><ellipse cx="6.5" cy="7.5" rx="5.8" ry="2.8" fill="none" stroke="#cfcfcf" stroke-width="1"/><path d="M6.5 1V13M4.8 2.7L6.5 0.8L8.2 2.7" stroke="#cfcfcf" stroke-width="0.9" fill="none"/></svg>
<svg class="a" style="left:1501.5px;top:860.3px;" width="11.5" height="14" viewBox="0 0 11.5 14"><circle cx="5.7" cy="7" r="4.2" fill="none" stroke="#5ed05e" stroke-width="1.8"/><path d="M3.8 1.2L7.5 2.8L4.8 5.2Z" fill="#5ed05e"/><path d="M7.8 12.8L4 11.2L6.7 8.8Z" fill="#5ed05e"/><rect x="0" y="6.2" width="2" height="1.6" fill="#4a4a4a"/><rect x="9.5" y="6.2" width="2" height="1.6" fill="#4a4a4a"/></svg>
<svg class="a" style="left:1518.5px;top:860.3px;" width="13" height="14" viewBox="0 0 13 14"><rect x="0.6" y="1.5" width="8.5" height="7" fill="none" stroke="#e4e4e4" stroke-width="1"/><rect x="0.6" y="1.5" width="8.5" height="1.8" fill="#e4e4e4"/><rect x="6" y="8" width="6.2" height="4.5" fill="#e4e4e4"/><path d="M7.5 8V6.5Q9.1 4.7 10.7 6.5V8" fill="none" stroke="#e4e4e4" stroke-width="1"/></svg>
<svg class="a" style="left:1543.5px;top:860.3px;" width="12.5" height="14" viewBox="0 0 12.5 14"><rect x="2.3" y="3.3" width="8" height="7.4" fill="#3f9ce8"/><path d="M0.6 4V1.4H3.5M9 1.4H12V4M12 10V12.6H9M3.5 12.6H0.6V10" stroke="#6ab8f4" stroke-width="1.2" fill="none"/></svg>
</div>
</body>
</html>
